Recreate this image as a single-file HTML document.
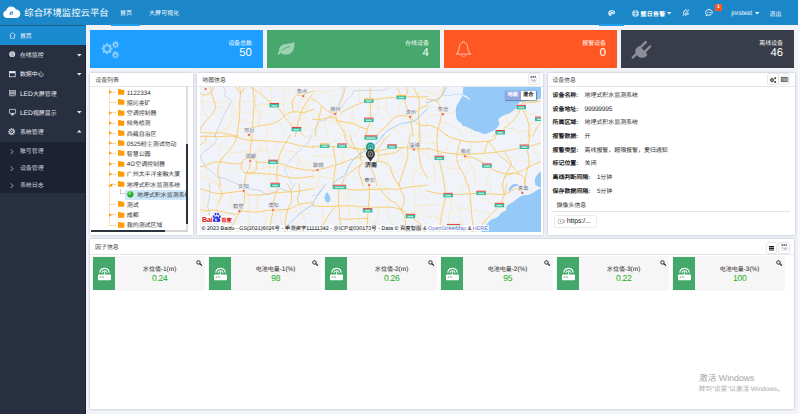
<!DOCTYPE html>
<html lang="zh-CN">
<head>
<meta charset="utf-8">
<title>综合环境监控云平台</title>
<style>
*{box-sizing:border-box;margin:0;padding:0}
html,body{width:800px;height:414px;overflow:hidden}
body{position:relative;background:#f1f3f9;font-family:"Liberation Sans",sans-serif;font-size:5.95px;color:#333;-webkit-font-smoothing:antialiased;text-rendering:geometricPrecision}
.a{position:absolute;white-space:nowrap}
svg{position:absolute;overflow:visible}
/* header */
#hd{left:0;top:0;width:800px;height:25.2px;background:#1b87c8}
#hd .t{color:#fff;height:25px;line-height:25px;top:0}
#logo-t{left:24.3px;top:1.3px !important;font-size:9.38px;letter-spacing:0;font-weight:300}
.ul{background:#1e9fee;height:2.4px;top:23.5px}
/* sidebar */
#sb{left:0;top:25.2px;width:85.8px;height:389px;background:#272f41;border-right:1.5px solid #1b2131}
#sb .act{left:0;top:0;width:85.8px;height:20px;background:#1b8bcf;border-top:.5px solid #1d5f8c}
#sb .sub{left:0;top:116.4px;width:85.8px;height:51px;background:#1c2232}
#sb .i{left:19.9px;height:12px;line-height:12px;color:#eef0f4}
#sb .s{color:#d8dbe2}
/* cards */
.cd{top:29.8px;width:172.8px;height:38.3px}
.cd .l{right:11px;top:9.9px;height:8px;line-height:8px;color:#fff;font-size:5.95px}
.cd .n{right:11px;top:17.2px;height:12px;line-height:12px;color:#fff;font-size:11.3px}
/* panels */
.pn{background:#fff;box-shadow:0 0 2.4px rgba(70,80,110,.4)}
.ph{left:0;top:0;right:0;height:14px;border-bottom:.5px solid #e3e6ea}
.pt{left:5.2px;top:1.75px;height:13px;line-height:13.4px;color:#444;font-size:5.95px}
.bt{width:10.3px;height:10.3px;top:1.4px;background:#fff;box-shadow:0 0 0 .5px #d2d2d2;border-radius:.8px}
/* tree */
.tr{left:36.8px;height:10px;line-height:10px;color:#333;font-size:5.95px}
/* info */
.k{left:5px;font-weight:bold;color:#222;height:10px;line-height:10px}
.v{left:37.2px;color:#2a2a2a;height:10px;line-height:10px}
/* factor */
.fc{top:18px;width:111.4px;height:33.4px;background:#f6f6f6;box-shadow:0 0 0 .4px #e9e9e9}
.fc .g{left:0;top:0;width:22px;height:33.4px;background:#44a86b}
.fc .fl{left:22px;right:0;top:7.9px;text-align:center;font-weight:500;color:#1c1c24;height:10px;line-height:10px;font-size:5.95px}
.fc .fv{left:22px;right:0;top:16.3px;text-align:center;color:#16ab16;height:11px;line-height:11px;font-size:8.5px;letter-spacing:-.25px}
.cl{font-size:5.3px;fill:#74777f;text-anchor:middle;font-family:"Liberation Sans",sans-serif;paint-order:stroke;stroke:#f4f6fb;stroke-width:.7px}
.cb{font-size:5.9px;fill:#2a2a2a;font-weight:bold}
.map{left:0;top:0;overflow:hidden}
</style>
</head>
<body>
<!-- ================= HEADER ================= -->
<div id="hd" class="a">
<svg style="left:2.6px;top:6.4px" width="17.6" height="12.4" viewBox="0 0 178 126"><path fill="#fff" d="M44 122C18 122 2 105 2 84c0-19 13-33 30-37C36 22 56 4 82 4c22 0 40 12 49 31 26 1 45 19 45 44 0 24-18 43-43 43z"/><path fill="#2b8fd0" d="M72 62l22-6 10 4-8 26-24 6-6-8z"/><path fill="#fff" d="M82 68l10-3-4 14-9 2z"/></svg>
<div class="a t" id="logo-t">综合环境监控云平台</div>
<div class="a t" style="left:120.1px;top:2px">首页</div>
<div class="a t" style="left:149px;top:2px;letter-spacing:.15px">大屏可视化</div>
<div class="a ul" style="left:111.3px;width:29.2px"></div>
<div class="a ul" style="left:599.4px;width:24.3px"></div>
<!-- palette -->
<svg style="left:608px;top:10.2px" width="7.4" height="6.3" viewBox="0 0 80 68"><path fill="#fff" d="M40 3C18 3 3 17 3 35c0 16 12 28 26 28 6 0 8-4 7-8-2-6 1-10 8-10h12c13 0 21-7 21-18C77 12 61 3 40 3z"/><circle cx="21" cy="30" r="7.5" fill="#1b87c8"/><circle cx="34" cy="17" r="7.5" fill="#1b87c8"/><circle cx="52" cy="17" r="7.5" fill="#1b87c8"/><circle cx="64" cy="30" r="7" fill="#1b87c8"/><path fill="#1b87c8" d="M30 36c4-4 14-6 22-4 6 2 8 6 4 8H44c-8 0-12 4-10 12-6-2-8-10-4-16z" opacity=".55"/></svg>
<!-- globe -->
<svg style="left:631.9px;top:9.6px" width="7" height="7" viewBox="0 0 70 70"><circle cx="35" cy="35" r="32" fill="#fff"/><path stroke="#1b87c8" stroke-width="4.5" fill="none" d="M35 4v62M4 35h62M12 17c14 7 32 7 46 0M12 53c14-7 32-7 46 0M35 4c-18 18-18 44 0 62M35 4c18 18 18 44 0 62"/></svg>
<div class="a t" style="left:640.6px;top:3px;font-weight:bold;letter-spacing:.25px">整日告警</div>
<svg style="left:667.2px;top:11.6px" width="4.4" height="2.4" viewBox="0 0 44 24"><path fill="#fff" d="M0 0h44L22 24z"/></svg>
<!-- bell slash -->
<svg style="left:681.6px;top:9.4px" width="7.6" height="7.4" viewBox="0 0 76 74"><path fill="none" stroke="#fff" stroke-width="9" stroke-linejoin="round" d="M38 10c-12 0-19 9-19 21 0 10-3 16-8 21h54c-5-5-8-11-8-21 0-12-7-21-19-21z"/><path fill="#fff" d="M30 58h16c0 5-4 9-8 9s-8-4-8-9z"/><path stroke="#1b87c8" stroke-width="14" d="M70 6L8 70"/><path stroke="#fff" stroke-width="8" stroke-linecap="round" d="M70 6L8 70"/></svg>
<!-- chat -->
<svg style="left:705.2px;top:9.2px" width="7.8" height="7.4" viewBox="0 0 78 74"><path fill="none" stroke="#fff" stroke-width="9" d="M40 6c18 0 32 12 32 28S58 62 40 62c-5 0-9-1-13-2L10 68l5-15C9 48 6 41 6 34 6 18 21 6 40 6z"/><circle cx="28" cy="34" r="5" fill="#fff"/><circle cx="42" cy="34" r="5" fill="#fff"/><circle cx="56" cy="34" r="5" fill="#fff"/></svg>
<div class="a" style="left:714.5px;top:4.1px;width:7.8px;height:7.2px;background:#ff5722;border-radius:.6px;color:#fff;font-size:5.2px;line-height:7.4px;text-align:center;font-weight:bold">1</div>
<div class="a t" style="left:731.2px;font-size:6.5px;top:1.3px">jnrstest</div>
<svg style="left:754.6px;top:11.6px" width="4.4" height="2.4" viewBox="0 0 44 24"><path fill="#fff" d="M0 0h44L22 24z"/></svg>
<div class="a t" style="left:769.5px;top:3px">退出</div>

</div>
<!-- ================= SIDEBAR ================= -->
<div id="sb" class="a">
<div class="a act"></div>
<div class="a sub"></div>
<!-- home -->
<svg style="left:8.6px;top:6.8px" width="7" height="7" viewBox="0 0 70 70"><path fill="none" stroke="#fff" stroke-width="6" stroke-linejoin="round" d="M35 6L6 32h9v30h40V32h9z"/></svg>
<div class="a i" style="top:5.7px">首页</div>
<!-- globe -->
<svg style="left:8.8px;top:26px" width="6.4" height="6.4" viewBox="0 0 70 70"><circle cx="35" cy="35" r="32" fill="#eef0f4"/><path stroke="#272f41" stroke-opacity=".75" stroke-width="3.2" fill="none" d="M35 4v62M4 35h62M12 17c14 7 32 7 46 0M12 53c14-7 32-7 46 0M35 4c-18 18-18 44 0 62M35 4c18 18 18 44 0 62"/></svg>
<div class="a i" style="top:24.97px;font-weight:500">在线监控</div>
<svg style="left:76.5px;top:28.6px" width="4.6" height="2.5" viewBox="0 0 46 25"><path fill="#e8eaf0" d="M0 0h46L23 25z"/></svg>
<!-- window -->
<svg style="left:8.5px;top:46.3px" width="6.8" height="6.2" viewBox="0 0 64 62"><rect x="4" y="4" width="56" height="54" fill="none" stroke="#eef0f4" stroke-width="7"/><rect x="4" y="4" width="56" height="18" fill="#eef0f4"/></svg>
<div class="a i" style="top:44.24px;font-weight:500">数据中心</div>
<svg style="left:76.5px;top:47.8px" width="4.6" height="2.5" viewBox="0 0 46 25"><path fill="#e8eaf0" d="M0 0h46L23 25z"/></svg>
<!-- LED -->
<svg style="left:8.7px;top:65px" width="7" height="6.2" viewBox="0 0 70 62"><rect x="4" y="4" width="62" height="46" fill="none" stroke="#eef0f4" stroke-width="6"/><path stroke="#eef0f4" stroke-width="5" fill="none" d="M18 14v26M30 14v26M42 14v26M54 14v26M12 22h46M12 32h46M4 58h62"/></svg>
<div class="a i" style="top:63.5px"><span style="font-size:6.7px">LED</span>大屏管理</div>
<!-- monitor -->
<svg style="left:8.6px;top:84.2px" width="7" height="6.4" viewBox="0 0 70 64"><rect x="4" y="4" width="62" height="40" rx="4" fill="none" stroke="#eef0f4" stroke-width="7"/><path fill="#eef0f4" d="M28 46h14l3 10H25z M18 56h34v6H18z"/></svg>
<div class="a i" style="top:82.8px"><span style="font-size:6.7px">LED</span>视屏显示</div>
<svg style="left:76.5px;top:86.2px" width="4.6" height="2.5" viewBox="0 0 46 25"><path fill="#e8eaf0" d="M0 0h46L23 25z"/></svg>
<!-- gear -->
<svg style="left:8.2px;top:102.9px" width="7.4" height="7.4" viewBox="0 0 74 74"><path fill="none" stroke="#eef0f4" stroke-width="11" stroke-dasharray="10.2 8.6" d="M37 8a29 29 0 1 0 .01 0z"/><circle cx="37" cy="37" r="20" fill="none" stroke="#eef0f4" stroke-width="9"/><circle cx="37" cy="37" r="6" fill="#eef0f4"/></svg>
<div class="a i" style="top:102.05px;font-weight:500">系统管理</div>
<svg style="left:76.5px;top:105.2px" width="4.6" height="2.5" viewBox="0 0 46 25"><path fill="#e8eaf0" d="M0 25h46L23 0z"/></svg>
<!-- sub items -->
<svg style="left:9.7px;top:123.4px" width="3.8" height="5.4" viewBox="0 0 38 54"><path fill="none" stroke="#e0e3ea" stroke-width="7" d="M8 4l22 23L8 50"/></svg>
<div class="a i s" style="top:120.45px">账号管理</div>
<svg style="left:9.7px;top:140.4px" width="3.8" height="5.4" viewBox="0 0 38 54"><path fill="none" stroke="#e0e3ea" stroke-width="7" d="M8 4l22 23L8 50"/></svg>
<div class="a i s" style="top:137.45px">设备管理</div>
<svg style="left:9.7px;top:157.6px" width="3.8" height="5.4" viewBox="0 0 38 54"><path fill="none" stroke="#e0e3ea" stroke-width="7" d="M8 4l22 23L8 50"/></svg>
<div class="a i s" style="top:154.65px">系统日志</div>

</div>
<!-- ================= STAT CARDS ================= -->
<div class="a cd" style="left:90.1px;background:#1e9fff">
<svg style="left:9.9px;top:10.6px;opacity:.46" width="20.4" height="19" viewBox="0 0 200 186"><g fill="#fff"><path fill-rule="evenodd" d="M67 30l10 1 4 13 9 4 12-7 11 11-7 12 4 9 13 4v16l-13 4-4 9 7 12-11 11-12-7-9 4-4 13H61l-4-13-9-4-12 7-11-11 7-12-4-9-13-4V77l13-4 4-9-7-12 11-11 12 7 9-4 4-13zM69 62a23 23 0 1 0 .01 0z"/><path fill-rule="evenodd" d="M150 6l8 1 2 9 5 3 8-4 7 8-5 8 2 5 9 3v10l-9 3-2 5 5 8-7 8-8-5-5 3-2 9h-11l-2-9-5-3-8 5-8-8 5-8-2-5-9-3V44l9-3 2-5-5-8 8-8 8 4 5-3 2-9zM153 38a11 11 0 1 0 .01 0z"/><path fill-rule="evenodd" d="M150 108l8 1 2 9 5 3 8-4 7 8-5 8 2 5 9 3v10l-9 3-2 5 5 8-7 8-8-5-5 3-2 9h-11l-2-9-5-3-8 5-8-8 5-8-2-5-9-3v-10l9-3 2-5-5-8 8-8 8 4 5-3 2-9zM153 140a11 11 0 1 0 .01 0z"/></g></svg>
<div class="a l">设备总数</div><div class="a n">50</div>
</div>
<div class="a cd" style="left:267.1px;background:#46a86c">
<svg style="left:10.3px;top:11.4px;opacity:.47" width="17.9" height="14.5" viewBox="80 95 265 215"><path fill="#fff" d="M335 105C300 135 230 130 180 145C130 160 105 200 112 245L92 275C84 285 88 298 100 300C108 300 112 296 118 288L135 268C170 305 250 305 295 265C335 225 345 160 335 105Z"/><path fill="none" stroke="#46a86c" stroke-width="13" stroke-linecap="round" d="M152 240C180 207 225 187 263 181"/></svg>
<div class="a l">在线设备</div><div class="a n">4</div>
</div>
<div class="a cd" style="left:444.2px;background:#ff5722">
<svg style="left:11px;top:10.6px;opacity:.5" width="17" height="17.8" viewBox="0 0 164 170"><path fill="none" stroke="#fff" stroke-width="11" stroke-linejoin="round" d="M82 14c-6 0-9 4-9 9-22 6-30 26-32 52-2 30-12 46-30 60h142c-18-14-28-30-30-60-2-26-10-46-32-52 0-5-3-9-9-9z"/><path fill="none" stroke="#fff" stroke-width="9" d="M62 142c2 12 10 18 20 18s18-6 20-18"/></svg>
<div class="a l">报警设备</div><div class="a n">0</div>
</div>
<div class="a cd" style="left:621.2px;background:#393d49">
<svg style="left:9.6px;top:10.4px;opacity:.92" width="20" height="18.8" viewBox="0 0 190 180"><g fill="#9497a0"><path d="M8 176c-5-5-5-11 0-16l44-44 16 16-44 44c-5 5-11 5-16 0z"/><path d="M46 86l24-24 84 84c-10 12-24 22-42 24-20 2-40-6-54-22-14-14-20-32-18-48 0-5 2-10 6-14z" transform="rotate(0)"/><path d="M54 78C44 100 48 126 66 144c18 18 46 22 66 10l24-20L78 56z"/><path d="M100 62l54-54c5-5 11-5 16 0s5 11 0 16l-54 54zM142 104l54-54c5-5 11-5 16 0s5 11 0 16l-54 54z" transform="translate(-22,4)"/></g></svg>
<div class="a l">离线设备</div><div class="a n">46</div>
</div>

<!-- ================= PANELS ================= -->
<div class="a pn" style="left:90px;top:72.8px;width:102.5px;height:162.3px;overflow:hidden">
<div class="a ph"></div><div class="a pt">设备列表</div>
<div class="a" style="left:0;top:13.6px;width:95.7px;height:144px;overflow:hidden"><div class="a" style="left:0;top:-13.6px;width:200px;height:170px">
<div class="a" style="left:19px;top:13.6px;width:.45px;height:138.5px;background:#ffe3bd"></div>
<div class="a" style="left:19.2px;top:19.25px;width:6.6px;height:.45px;background:#ffd699"></div>
<svg style="left:18.8px;top:17.5px" width="3" height="4" viewBox="0 0 34 44"><path fill="#ffa11f" d="M0 0l34 22L0 44z"/></svg>
<svg style="left:27.7px;top:16.4px" width="6.3" height="5.8" viewBox="0 0 63 58"><path fill="#ff9a0a" d="M0 6c0-3 2-6 6-6h18l7 8h26c4 0 6 3 6 6v38c0 3-2 6-6 6H6c-4 0-6-3-6-6z"/></svg>
<div class="a tr" style="top:16px"><span style="font-size:6.3px">1122334</span></div>
<div class="a" style="left:19.2px;top:29.45px;width:6.6px;height:.45px;background:#ffd699"></div>
<svg style="left:27.7px;top:26.6px" width="6.3" height="5.8" viewBox="0 0 63 58"><path fill="#ff9a0a" d="M0 6c0-3 2-6 6-6h18l7 8h26c4 0 6 3 6 6v38c0 3-2 6-6 6H6c-4 0-6-3-6-6z"/></svg>
<div class="a tr" style="top:26.2px">招远金矿</div>
<div class="a" style="left:19.2px;top:39.65px;width:6.6px;height:.45px;background:#ffd699"></div>
<svg style="left:18.8px;top:37.9px" width="3" height="4" viewBox="0 0 34 44"><path fill="#ffa11f" d="M0 0l34 22L0 44z"/></svg>
<svg style="left:27.7px;top:36.8px" width="6.3" height="5.8" viewBox="0 0 63 58"><path fill="#ff9a0a" d="M0 6c0-3 2-6 6-6h18l7 8h26c4 0 6 3 6 6v38c0 3-2 6-6 6H6c-4 0-6-3-6-6z"/></svg>
<div class="a tr" style="top:36.4px">空调控制器</div>
<div class="a" style="left:19.2px;top:49.85px;width:6.6px;height:.45px;background:#ffd699"></div>
<svg style="left:18.8px;top:48.1px" width="3" height="4" viewBox="0 0 34 44"><path fill="#ffa11f" d="M0 0l34 22L0 44z"/></svg>
<svg style="left:27.7px;top:47px" width="6.3" height="5.8" viewBox="0 0 63 58"><path fill="#ff9a0a" d="M0 6c0-3 2-6 6-6h18l7 8h26c4 0 6 3 6 6v38c0 3-2 6-6 6H6c-4 0-6-3-6-6z"/></svg>
<div class="a tr" style="top:46.6px">倾角检测</div>
<div class="a" style="left:19.2px;top:60.05px;width:6.6px;height:.45px;background:#ffd699"></div>
<svg style="left:18.8px;top:58.3px" width="3" height="4" viewBox="0 0 34 44"><path fill="#ffa11f" d="M0 0l34 22L0 44z"/></svg>
<svg style="left:27.7px;top:57.2px" width="6.3" height="5.8" viewBox="0 0 63 58"><path fill="#ff9a0a" d="M0 6c0-3 2-6 6-6h18l7 8h26c4 0 6 3 6 6v38c0 3-2 6-6 6H6c-4 0-6-3-6-6z"/></svg>
<div class="a tr" style="top:56.8px">西藏自治区</div>
<div class="a" style="left:19.2px;top:70.25px;width:6.6px;height:.45px;background:#ffd699"></div>
<svg style="left:18.8px;top:68.5px" width="3" height="4" viewBox="0 0 34 44"><path fill="#ffa11f" d="M0 0l34 22L0 44z"/></svg>
<svg style="left:27.7px;top:67.4px" width="6.3" height="5.8" viewBox="0 0 63 58"><path fill="#ff9a0a" d="M0 6c0-3 2-6 6-6h18l7 8h26c4 0 6 3 6 6v38c0 3-2 6-6 6H6c-4 0-6-3-6-6z"/></svg>
<div class="a tr" style="top:67px"><span style="font-size:6.3px">0525</span>粉尘测试勿动</div>
<div class="a" style="left:19.2px;top:80.45px;width:6.6px;height:.45px;background:#ffd699"></div>
<svg style="left:18.8px;top:78.7px" width="3" height="4" viewBox="0 0 34 44"><path fill="#ffa11f" d="M0 0l34 22L0 44z"/></svg>
<svg style="left:27.7px;top:77.6px" width="6.3" height="5.8" viewBox="0 0 63 58"><path fill="#ff9a0a" d="M0 6c0-3 2-6 6-6h18l7 8h26c4 0 6 3 6 6v38c0 3-2 6-6 6H6c-4 0-6-3-6-6z"/></svg>
<div class="a tr" style="top:77.2px">智慧公园</div>
<div class="a" style="left:19.2px;top:90.65px;width:6.6px;height:.45px;background:#ffd699"></div>
<svg style="left:18.8px;top:88.9px" width="3" height="4" viewBox="0 0 34 44"><path fill="#ffa11f" d="M0 0l34 22L0 44z"/></svg>
<svg style="left:27.7px;top:87.8px" width="6.3" height="5.8" viewBox="0 0 63 58"><path fill="#ff9a0a" d="M0 6c0-3 2-6 6-6h18l7 8h26c4 0 6 3 6 6v38c0 3-2 6-6 6H6c-4 0-6-3-6-6z"/></svg>
<div class="a tr" style="top:87.4px"><span style="font-size:6.3px">4G</span>空调控制器</div>
<div class="a" style="left:19.2px;top:100.85px;width:6.6px;height:.45px;background:#ffd699"></div>
<svg style="left:18.8px;top:99.1px" width="3" height="4" viewBox="0 0 34 44"><path fill="#ffa11f" d="M0 0l34 22L0 44z"/></svg>
<svg style="left:27.7px;top:98px" width="6.3" height="5.8" viewBox="0 0 63 58"><path fill="#ff9a0a" d="M0 6c0-3 2-6 6-6h18l7 8h26c4 0 6 3 6 6v38c0 3-2 6-6 6H6c-4 0-6-3-6-6z"/></svg>
<div class="a tr" style="top:97.6px">广州太平洋金融大厦</div>
<div class="a" style="left:19.2px;top:111.05px;width:6.6px;height:.45px;background:#ffd699"></div>
<svg style="left:17.6px;top:109.9px" width="4.4" height="3.6" viewBox="0 0 44 36"><path fill="#ff9800" d="M44 0v36H0z"/></svg>
<svg style="left:27.7px;top:108.2px" width="6.3" height="5.8" viewBox="0 0 63 58"><path fill="#ff9a0a" d="M0 6c0-3 2-6 6-6h18l7 8h26c4 0 6 3 6 6v38c0 3-2 6-6 6H6c-4 0-6-3-6-6z"/></svg>
<div class="a tr" style="top:107.8px">地埋式积水监测系统</div>
<div class="a" style="left:35.2px;top:117.2px;width:60.8px;height:9.9px;background:#cfe8fc"></div>
<div class="a" style="left:30px;top:116.7px;width:5px;height:4.8px;border-left:.5px solid #c9c9c9;border-bottom:.5px solid #c9c9c9"></div>
<svg style="left:37.4px;top:118.2px" width="6.6" height="6.6" viewBox="0 0 66 66"><defs><radialGradient id="gb" cx=".4" cy=".32" r=".7"><stop offset="0" stop-color="#8be58b"/><stop offset=".55" stop-color="#2db82d"/><stop offset="1" stop-color="#168f16"/></radialGradient></defs><circle cx="33" cy="33" r="31" fill="url(#gb)"/></svg>
<div class="a tr" style="left:47px;top:118px">地埋式积水监测系统</div>
<div class="a" style="left:19.2px;top:131.45px;width:6.6px;height:.45px;background:#ffd699"></div>
<svg style="left:27.7px;top:128.6px" width="6.3" height="5.8" viewBox="0 0 63 58"><path fill="#ff9a0a" d="M0 6c0-3 2-6 6-6h18l7 8h26c4 0 6 3 6 6v38c0 3-2 6-6 6H6c-4 0-6-3-6-6z"/></svg>
<div class="a tr" style="top:128.2px">测试</div>
<div class="a" style="left:19.2px;top:141.65px;width:6.6px;height:.45px;background:#ffd699"></div>
<svg style="left:18.8px;top:139.9px" width="3" height="4" viewBox="0 0 34 44"><path fill="#ffa11f" d="M0 0l34 22L0 44z"/></svg>
<svg style="left:27.7px;top:138.8px" width="6.3" height="5.8" viewBox="0 0 63 58"><path fill="#ff9a0a" d="M0 6c0-3 2-6 6-6h18l7 8h26c4 0 6 3 6 6v38c0 3-2 6-6 6H6c-4 0-6-3-6-6z"/></svg>
<div class="a tr" style="top:138.4px">成都</div>
<div class="a" style="left:19.2px;top:151.85px;width:6.6px;height:.45px;background:#ffd699"></div>
<svg style="left:27.7px;top:149px" width="6.3" height="5.8" viewBox="0 0 63 58"><path fill="#ff9a0a" d="M0 6c0-3 2-6 6-6h18l7 8h26c4 0 6 3 6 6v38c0 3-2 6-6 6H6c-4 0-6-3-6-6z"/></svg>
<div class="a tr" style="top:148.6px">我的测试区域</div>
</div></div>
<div class="a" style="left:95.7px;top:13.6px;width:2px;height:144px;background:#dedede"></div>
<div class="a" style="left:95.8px;top:71px;width:1.9px;height:80.3px;background:#2e3340"></div>
<div class="a" style="left:1px;top:157.4px;width:96.6px;height:2.2px;background:#d4d4d4"></div>
<div class="a" style="left:1px;top:157.4px;width:73.8px;height:2.2px;background:#2e3340"></div>
</div>
<div class="a pn" style="left:197px;top:72.8px;width:346.3px;height:162.3px">
<div class="a ph"></div><div class="a pt">地图信息</div>
<div class="a bt" style="left:331.6px"><svg style="left:1.6px;top:1.4px" width="6.6" height="6.8" viewBox="0 0 66 68"><rect x="3" y="12" width="60" height="53" fill="#fbfbfd" stroke="#c9c9d6" stroke-width="3.5"/><path fill="#2b2b33" d="M6 3h13v13H6zM26 3h13v13H26zM46 3h13v13H46z"/><path fill="#b9bcc6" d="M30 36h26v20H30z"/><path fill="#8d93a8" d="M10 26l8 18 10-8v8H10z"/></svg></div>
</div>
<svg class="map" style="left:199.8px;top:86.6px" width="341.4" height="145" viewBox="199.8 86.6 341.4 145">
<rect x="190" y="80" width="360" height="160" fill="#f0f3fa"/>
<path fill="none" stroke="#fbe9bf" stroke-width="0.42" d="M308.6 105C307.7 105.9 305.8 108 303.1 110.3C300.5 112.7 295.3 116.4 292.8 118.9C290.4 121.4 289.3 124.1 288.6 125.2M341.7 118.9C341.1 120.1 339.1 122.8 338.1 125.9C337.1 128.9 337.2 133.7 335.7 137C334.2 140.3 330.1 144.3 328.9 145.7M334.2 232.9C335.5 232.8 339.5 233.2 342.2 232.4C344.9 231.7 347.7 229.3 350.4 228.5C353.2 227.6 355.4 227.7 358.6 227.4C361.9 227.1 368.2 226.9 370.1 226.8M325.7 166.5C327.3 167 332 168.5 335.6 169.8C339.2 171 343.2 172.6 347.3 174C351.4 175.4 358 177.5 360.1 178.2M321.9 120.1C323.4 120.3 327.8 121 330.9 121.4C333.9 121.9 336.8 122.4 340.2 122.8C343.6 123.2 347.9 124.2 351.4 123.8C354.9 123.4 359.7 120.9 361.4 120.3M252.8 134.6C251.2 135.8 246.8 139.9 243.6 141.9C240.4 143.8 236.7 145.5 233.5 146.2C230.3 147 227.7 146.8 224.3 146.5C220.9 146.2 216.8 145.4 213.3 144.7C209.8 144 207 143.9 203.4 142.2C199.9 140.5 194 135.9 192.1 134.7M361.4 184.5C363.6 185.3 371.2 187.5 374.6 189.2C377.9 190.9 378.8 192.7 381.7 194.7C384.5 196.6 388.3 199.6 391.7 200.7C395 201.9 398.9 201.7 401.9 201.4C404.8 201.2 408.2 199.7 409.4 199.4M215.5 200.7C217.7 201.3 224.9 203.6 228.3 204.7C231.8 205.8 233.4 206.4 236.1 207.1C238.9 207.8 241.8 208.9 244.9 208.9C248 208.9 253.1 207.6 254.8 207.3M388.1 191.1C386.9 190.5 383.4 188.5 380.8 187.8C378.1 187.2 375.3 186.9 372.2 187.1C369.1 187.2 365.1 188.4 362 188.9C358.8 189.3 356 188.6 353.1 189.6C350.3 190.7 347.6 193 344.8 195.1C342.1 197.2 337.9 201.1 336.6 202.3M529.7 188.6C529.7 190.8 530.5 197.8 529.6 201.7C528.8 205.7 526.1 209.1 524.5 212.3C522.8 215.5 520.4 219.4 519.6 220.8M333.3 156.2C334.3 157.3 336.7 160.7 339 162.5C341.4 164.2 344.8 166.1 347.3 166.8C349.9 167.6 351.9 167.5 354.3 167.1C356.7 166.8 360.4 165.2 361.7 164.8M322.6 85.6C321.5 86.5 318.2 89.3 316.1 91.5C314.1 93.7 311.8 95.7 310.2 99C308.6 102.3 308.3 108.1 306.4 111.4C304.6 114.6 301.3 116.5 299.2 118.6C297.1 120.7 295.3 121.7 293.9 124C292.4 126.4 291 131.3 290.4 132.8M287.8 210.1C290.1 210.6 297 212.3 301.2 213C305.4 213.6 309.2 212.7 313 213.8C316.8 214.9 322 218.6 323.9 219.6M299.5 181.3C301.7 181.9 308.8 184.4 312.3 185.3C315.8 186.1 317.6 186 320.7 186.6C323.9 187.2 327.6 187.7 331 188.7C334.5 189.7 338.3 190.6 341.7 192.5C345.1 194.3 350 198.5 351.7 199.7M263.4 118.7C264.4 120.1 267.5 123.7 269.4 127.3C271.2 130.8 273.5 136.3 274.6 140.2C275.6 144.1 274.6 147 275.5 150.4C276.4 153.9 279.1 159.1 279.8 160.8M315.8 206.9C314.3 207.6 309.6 209.2 307 210.8C304.5 212.3 302.3 214.2 300.4 216.3C298.6 218.4 298.1 220.5 295.9 223.4C293.7 226.2 290.2 231 287.3 233.6C284.4 236.1 279.9 237.9 278.4 238.8M424.3 205.5C425.9 206.8 431.3 210.7 434 213.4C436.6 216 437.5 219.1 440.2 221.6C443 224.2 448.8 227.6 450.5 228.7M311.6 205.7C309.6 206 302.7 206.3 299.5 207.3C296.4 208.2 294.9 210.7 292.6 211.4C290.2 212.2 288.3 211.8 285.4 211.8C282.5 211.8 278.7 211.8 275.2 211.3C271.6 210.9 267.6 210 264.1 209.1C260.6 208.2 255.9 206.6 254.2 206.1M524.2 105.8C525 107.9 527.7 114.9 528.7 118.8C529.8 122.7 530.8 125.9 530.7 129.3C530.6 132.7 528.6 137.4 528.2 139M501.1 209.7C502.8 210.3 508 211.9 510.9 213.5C513.8 215.1 515.5 216.8 518.4 219C521.3 221.3 524.7 225.3 528.3 227.2C531.9 229 536.6 228.5 540.1 230.1C543.6 231.8 547.9 235.9 549.4 237.1M481.2 161.7C479.7 162.6 474.4 164.6 471.9 166.9C469.4 169.2 467.6 172.8 466.4 175.4C465.2 177.9 465.6 179.9 464.6 182.1C463.6 184.4 460.9 187.9 460.2 189.1M361.2 194C360.6 195.7 358.7 200.4 357.4 204C356.1 207.7 354.8 212.9 353.2 215.7C351.7 218.6 349.6 219.2 348.3 221.3C347 223.3 345.9 225.1 345.4 228C344.9 230.8 345.3 236.4 345.2 238.1M204.6 220.2C206.3 220.7 211.1 222.2 214.6 223.4C218.2 224.6 222.3 226.1 225.9 227.2C229.5 228.3 232.3 229 236.2 230.1C240.1 231.2 245.2 232 249.3 233.5C253.5 235 259.2 238.3 261.1 239.3M525.9 121.8C525.2 123 522.8 125.9 521.9 128.7C521 131.5 520.2 135.6 520.4 138.7C520.5 141.8 521.1 144.2 522.8 147C524.4 149.9 529.1 154.5 530.4 155.9M470.3 220.6C472.5 220.9 480 221.2 483.3 222.3C486.7 223.4 488.4 224.9 490.4 227.1C492.4 229.3 493.3 232.2 495.3 235.6C497.3 239 500.9 244.3 502.4 247.6C503.9 250.9 503.8 254.2 504 255.5M346.4 161.5C347.2 162.5 349.2 165.5 351.1 167.6C352.9 169.7 355.1 171.8 357.7 174.3C360.2 176.7 363.5 180 366.4 182.3C369.3 184.7 373.6 187.6 375 188.6M298.6 230.5C299.5 231.5 302 234.6 303.9 236.2C305.7 237.8 307.9 238.5 309.9 240.3C311.9 242.1 313.2 245.1 315.6 247.1C318 249 322.9 251 324.4 251.8M515.1 208.5C516.2 209.9 519.9 214 522.1 216.5C524.3 219 525.5 221.1 528.3 223.4C531 225.8 534.7 228.9 538.5 230.8C542.3 232.7 549 234.1 551.1 234.8M289.3 84.2C291.4 83.9 298.2 83.9 302.2 82.4C306.1 80.9 310 77.4 313.1 75.4C316.2 73.3 317.6 72 320.8 69.9C324 67.8 329.4 64.9 332.2 62.7C335 60.6 336.8 58 337.7 57.1M380 118.6C381.3 118.7 385.2 118.3 388.2 119.4C391.2 120.5 395.2 123.5 398 125.3C400.8 127 402.2 128.1 405.1 129.8C408 131.5 413.6 134.6 415.3 135.6M289.9 206.2C288.1 207.1 282.2 210.4 279.2 212C276.2 213.6 275 214 271.7 215.6C268.5 217.3 261.7 220.8 259.7 221.8M232.1 208.5C232.5 210.7 234.4 217.9 234.3 221.6C234.3 225.2 232.1 227.4 231.6 230.3C231.1 233.2 230.9 235.4 231.5 238.9C232 242.5 234.5 248.1 235.1 251.6C235.8 255 236.5 256.1 235.6 259.5C234.7 263 230.7 270 229.7 272.1M488.9 83.8C488.5 85 487.7 88.2 486.6 90.8C485.4 93.4 483.9 95.9 482 99.3C480.2 102.8 477.6 107.8 475.4 111.5C473.2 115.1 470.1 118.3 468.8 121.3C467.5 124.3 467.8 128.1 467.6 129.5M289.3 82.2C289.3 84 288.4 88.9 288.8 93C289.2 97 290.6 102.7 291.7 106.4C292.8 110.1 293.5 112.7 295.4 115.2C297.3 117.6 300.3 119.1 303 121.2C305.6 123.3 310 126.5 311.4 127.5M265.4 159.8C266.7 160.3 270.2 161.4 273 162.4C275.7 163.5 278.6 165.3 281.9 166.4C285.2 167.5 288.9 168.9 293 168.9C297.1 168.9 302.9 166.5 306.5 166.2C310.1 166 313.1 167.3 314.5 167.5M508.5 203.1C507.7 204.6 504.7 208.9 503.3 212.2C501.9 215.5 500.3 219.1 499.9 223C499.4 226.9 500.7 231.9 500.5 235.7C500.3 239.6 499.2 242.5 498.7 246.2C498.2 249.9 497.7 256.1 497.5 258M372.4 222.6C370.8 223.4 366.1 226.5 362.5 227.5C358.8 228.4 354.1 228.2 350.7 228.1C347.3 228 343.6 227.2 342.2 227M205.7 102.2C206.7 103.7 209.2 108.8 211.2 110.8C213.1 112.9 215 113.2 217.2 114.6C219.4 116.1 223.2 118.7 224.4 119.5M287.5 152.4C288.7 152.9 292.1 153.9 294.4 155.2C296.8 156.5 298.9 159.1 301.6 160.3C304.2 161.4 308.8 161.7 310.3 161.9M451.1 113.4C450 114.6 446.9 117.9 444.5 120.5C442.1 123.2 439.6 126.8 436.7 129.3C433.8 131.8 429.9 133.9 427.2 135.5C424.5 137.1 422.5 137.1 420.4 138.7C418.2 140.2 416.5 143.1 414.2 144.9C411.8 146.7 407.7 148.8 406.3 149.6M394.3 83.5C395.3 84.3 397.8 86.8 400.4 88.3C403 89.7 407.2 90.7 410.1 92.1C412.9 93.6 414.5 95.2 417.5 97.1C420.5 99.1 425.4 101 428 103.7C430.7 106.3 432.6 111.5 433.5 113.1M304.3 94.9C304.6 97 306.2 103.8 305.9 107.5C305.6 111.2 303.2 114.1 302.5 117.1C301.8 120.1 302.5 122.9 301.6 125.5C300.7 128.1 298.6 130.4 297.1 132.7C295.6 135 293.1 138.1 292.4 139.1M379 229.3C380.3 230.7 383.9 235.3 387.2 237.9C390.5 240.4 395.7 242.9 398.7 244.6C401.6 246.4 402.1 247.6 404.9 248.2C407.7 248.8 412.1 248.4 415.3 248.5C418.6 248.5 422.9 248.3 424.4 248.2M244.2 134.9C246 135.9 252.4 138.8 255 140.7C257.7 142.7 258.8 143.7 260.3 146.5C261.8 149.4 263.5 154.6 264 158C264.4 161.4 263.2 163.8 263.1 166.9C263.1 170.1 263.4 175.1 263.5 176.7M545.8 172.9C546.2 175 547.3 182.4 548.1 185.7C549 188.9 550.1 189.5 551 192.5C551.9 195.4 552 199.8 553.7 203.6C555.4 207.3 559.2 211.9 561.4 215C563.6 218.2 565.3 219.2 567 222.4C568.7 225.5 570.9 232 571.6 234M345.1 86.1C343 86.8 336.3 89.3 332.3 90.6C328.2 91.9 324.2 92 320.7 94C317.3 95.9 314.7 99.3 311.8 102.1C308.8 104.9 305.7 108.4 303.1 110.8C300.4 113.1 298.1 113.3 295.9 116.2C293.6 119.1 290.7 126.2 289.7 128.1M239.5 154.8C240.9 156.3 245.4 160.9 247.7 163.8C250 166.7 250.9 169.5 253.1 172C255.3 174.6 258.8 176.8 260.9 178.9C263 181.1 264.3 183 265.8 185.1C267.2 187.2 269 190.5 269.6 191.5M370.7 207.4C369.5 209.4 365.1 216.1 363.2 219.2C361.3 222.4 360.2 223.8 359.3 226.2C358.4 228.6 358.1 231.1 357.7 233.7C357.4 236.2 357.1 238.6 357.4 241.3C357.6 244 358.6 246.3 359.2 249.9C359.8 253.5 360.8 260.8 361.1 263M458.2 145.6C458.8 147 460.1 151.8 461.8 154.2C463.5 156.7 466.9 158 468.4 160.3C470 162.5 470.1 164.6 471.2 167.6C472.4 170.6 474.6 176.5 475.3 178.3M498 115.1C499.4 116.4 503.9 120.6 506.5 122.8C509.2 125 511.3 125.6 513.8 128.5C516.2 131.4 518.8 137.1 521.4 140C524 142.8 528.2 144.7 529.6 145.7M463.2 206.3C461.8 207.2 458.6 210.5 455.1 211.8C451.7 213 446.9 214 442.5 213.9C438.2 213.9 432.5 211.8 429 211.4C425.4 211.1 424.1 211.2 421.2 212C418.3 212.8 415.3 215 411.5 216.3C407.6 217.5 400.4 218.9 398.2 219.4M448.4 181.9C447.6 183.8 444.1 190.1 443.4 193.3C442.6 196.5 443.9 198.6 444 201.2C444.1 203.7 444.6 205 444.1 208.4C443.7 211.9 442.4 218 441.3 221.9C440.3 225.8 439 228.3 437.9 232C436.8 235.7 435.2 241.9 434.6 243.9M229.7 128.2C228.4 128.6 224.1 130 221.5 130.6C219 131.2 217.3 131.1 214.6 131.9C211.9 132.8 208.6 135.3 205.1 135.8C201.6 136.3 195.5 135.1 193.6 134.9M505.4 155.3C506.9 155.7 512.2 156.9 514.9 157.9C517.6 158.8 518.3 160.1 521.6 160.9C525 161.6 531.4 161.8 534.8 162.3C538.2 162.9 540.9 163.9 542.1 164.3M274.9 147.4C276.1 148.4 279.2 151.2 282 153.4C284.8 155.5 288.1 158.4 291.6 160.2C295.2 162 300.1 162.5 303.6 164.1C307.1 165.7 308.8 168.1 312.6 169.7C316.3 171.2 321.5 172.5 325.9 173.2C330.2 174 336.5 174 338.6 174.1M275.9 115.9C275.1 117.6 273.1 122.6 271.2 126.3C269.3 129.9 266.6 133.8 264.4 137.7C262.2 141.5 259 145.5 257.7 149.3C256.5 153 257.6 157.5 256.8 160.4C256.1 163.3 253.9 165.8 253.3 166.9M203.1 174C204 175.4 207.2 179.6 208.7 182.5C210.2 185.3 210.6 188.7 212 191.1C213.4 193.4 216.3 195.6 217.2 196.6M253 111.2C253 113.1 252.7 119.3 252.9 122.8C253 126.3 253.4 129.5 253.9 132.4C254.5 135.3 254.8 137.9 256.2 140.2C257.6 142.6 259.6 144.2 262.5 146.6C265.3 149.1 269.4 152.9 273.4 154.9C277.4 156.9 284.4 157.9 286.6 158.5M267.7 136.9C266.6 138.5 262.6 143.4 261 146.7C259.3 150.1 258.7 153.9 257.8 157.1C256.9 160.3 256.8 163 255.6 166.1C254.5 169.1 252.5 172.5 250.9 175.2C249.3 178 247.8 180 245.9 182.4C244 184.8 240.4 188.5 239.3 189.7M326.8 153.5C325.4 155.1 321.5 160.6 318.8 162.8C316.1 165 313.6 164.8 310.4 167C307.3 169.1 301.6 174.3 299.8 175.7M411.6 122.2C410.3 122.9 406.7 125.2 403.5 126.3C400.3 127.4 396.7 128.7 392.7 129C388.6 129.3 383.3 127.5 379.1 128.2C374.8 128.8 370.6 130.7 367.2 132.8C363.7 135 359.9 139.8 358.5 141.2M358.5 201.9C357.2 202.4 353.4 203.8 351 204.6C348.7 205.5 347 206.8 344.4 207C341.7 207.3 338.1 206.8 335.3 206.3C332.5 205.8 331 204.5 327.5 204.1C324.1 203.7 318.7 203.9 314.5 204C310.2 204 304.1 204.3 302 204.3M404.1 160.9C404.8 162 406 165.2 408.3 167.1C410.6 169 414 170.8 417.8 172.4C421.5 174.1 426.9 174.7 430.9 177C434.8 179.3 439.6 184.7 441.3 186.2M287.9 94.6C289.5 96.3 294.8 102.2 297.6 104.5C300.4 106.7 301.5 106.5 304.7 108C307.9 109.5 313 112.3 316.7 113.5C320.5 114.7 323.7 114 327.4 115.2C331 116.3 335.5 118.5 338.5 120.4C341.5 122.2 344.2 125.3 345.4 126.3M293 123.1C294.3 123.8 298.1 126.2 300.7 127.3C303.2 128.3 305.7 127.8 308.5 129.2C311.3 130.6 314.5 133.9 317.4 135.7C320.4 137.5 323.7 137.8 326.2 140C328.7 142.1 331.4 147.1 332.4 148.5M276.1 206.9C276 208.6 276.2 213.5 275.2 217.2C274.3 220.9 271.9 226.2 270.2 229C268.5 231.9 265.8 233.2 264.9 234M298 100.1C298.8 101.4 301.8 105.3 303 108.3C304.1 111.3 303.6 114.7 304.8 118.3C305.9 121.8 309 126.5 309.8 129.6C310.7 132.8 309.7 136.1 309.6 137.4M404.3 177.7C405.3 178.3 408.9 179.7 410.6 181.3C412.3 183 413.1 184.4 414.4 187.6C415.7 190.7 417.9 196 418.5 200.3C419.2 204.5 418.4 209.3 418.5 213C418.7 216.7 419.3 221 419.4 222.6M413 93.7C414.3 93.9 417.6 95 420.4 94.8C423.2 94.5 426.4 93.1 429.8 92.3C433.3 91.5 438.1 91.2 441.1 90C444.1 88.9 445.1 86.8 447.8 85.4C450.4 83.9 454.1 83 456.8 81.4C459.5 79.8 462.9 76.9 464.2 76M529.8 130C529.6 131.2 529.8 134 528.9 137.1C527.9 140.2 525.7 145.4 524.1 148.8C522.5 152.1 520.9 153.7 519.1 157.1C517.3 160.6 514.8 166.1 513.3 169.4C511.9 172.7 510.9 175.7 510.4 177M234.7 95.6C234.4 97 232.8 100.5 233 103.6C233.3 106.7 235.2 110.1 236 114C236.8 118 236.6 123.5 237.9 127.3C239.2 131.1 241.7 134 243.8 136.9C245.9 139.9 249.3 143.8 250.4 145.1M246.1 125.5C246.6 127.2 248.8 131.5 249.4 135.4C250 139.3 249.2 145.6 249.7 149.2C250.1 152.7 251.8 155.4 252.2 156.6M526.2 232.8C526.1 234.7 525 240.5 525.6 244.2C526.2 248 528.7 251.4 529.8 255.5C530.9 259.5 531.7 266.3 532.1 268.5M419.8 214.4C418.9 215.4 416 218.1 414.4 220.7C412.8 223.2 411.7 226.6 410.4 229.6C409 232.5 407 235.4 406.2 238.3C405.4 241.2 405.7 245.6 405.6 247M449.5 220.7C451 221.1 455.2 222.6 458.4 223.4C461.5 224.2 464.9 223.9 468.4 225.3C471.9 226.7 477.3 230.6 479.1 231.6M422.9 129.4C423.9 130.7 427.1 135.3 428.8 137.6C430.6 139.8 431.7 140.7 433.4 143.1C435.1 145.5 436.6 149 439 151.9C441.5 154.7 445.8 157.3 448.2 160.1C450.6 163 451.4 166.3 453.6 168.8C455.8 171.3 460.2 174.3 461.5 175.4M232.4 101.5C232.3 103.3 232 109.1 231.5 112C231.1 114.9 229.8 115.7 229.8 119.1C229.8 122.5 231.2 130.2 231.5 132.4M305 193.3C307 194.1 313.4 197.4 316.5 198.2C319.7 198.9 320.8 197.6 324 197.6C327.2 197.6 332.6 198.5 335.8 198.2C339 197.8 340.5 195.9 343.3 195.5C346 195.1 348.8 195.1 352.3 195.8C355.7 196.6 362.1 199.4 364.1 200.1M435.9 193.4C436.9 194.4 439.4 197.5 442 199.7C444.5 201.8 448.7 203.8 451.1 206.3C453.5 208.9 453.8 212 456.3 215.1C458.8 218.2 463.1 221.9 466 224.8C469 227.8 472.7 231.3 474 232.6M411.2 118.4C412.1 119.4 415.1 121.6 416.6 124.5C418 127.4 419.5 132.6 419.9 135.8C420.2 139 419.6 141.4 418.9 143.9C418.3 146.5 416.4 149.9 415.9 151.1M381.3 180.2C382 181.9 384.8 187.5 385.5 190.5C386.1 193.5 386.4 195.2 385.5 198.2C384.6 201.2 381.8 204.7 380.1 208.3C378.4 211.9 376.5 215.7 375.4 219.9C374.3 224.2 374 229.9 373.3 233.7C372.6 237.6 371.5 241.5 371.2 243M463.5 150.2C465.2 150.8 469.5 152.8 473.5 153.8C477.4 154.8 482.8 154.5 487 156C491.2 157.5 496.7 161.7 498.7 162.9M509.6 195.2C508.8 196.9 506.3 202.2 504.9 205.5C503.5 208.9 502.7 212.8 501.2 215.4C499.7 218.1 497.5 218.5 495.8 221.2C494 223.9 491.3 229.8 490.4 231.5M202.6 82C203.4 83.6 205.6 88.8 207.1 91.8C208.6 94.7 209.7 97.3 211.7 99.7C213.6 102 217.8 104.7 219.1 105.7M485.9 106.2C487.6 106.6 492.8 108.5 495.8 108.7C498.7 108.9 500.8 107.5 503.6 107.2C506.4 107 508.8 106.4 512.5 107.1C516.2 107.7 523.5 110.4 525.7 111M214.5 208.8C212.8 209.2 207.2 210.6 204.2 211.3C201.2 212.1 198.5 212.1 196.3 213.3C194 214.4 192.2 216.2 190.8 218.3C189.4 220.4 188.4 222.5 187.9 226.1C187.4 229.6 187.1 235.5 187.7 239.5C188.4 243.4 191.3 248.2 192 249.9M425.6 112.2C425.5 113.5 425.1 117.5 425.3 120.4C425.4 123.3 425.2 126.1 426.6 129.4C428.1 132.7 432.2 136.6 434.1 140.3C436 144 435.7 148.3 437.9 151.7C440.1 155.1 444.8 157.7 447.2 160.6C449.7 163.5 451.8 167.8 452.7 169.2M455.5 151.7C457.2 152.6 461.8 155.9 465.7 157C469.6 158 474.7 156.9 478.9 158.2C483.1 159.5 488.7 163.8 490.7 165M287.3 89.7C286 91.6 282.2 98.2 279.6 100.7C277 103.3 275.1 104.1 271.6 105C268 105.8 262.1 104.8 258.4 105.7C254.6 106.7 252.1 108.1 249 110.5C245.8 112.9 242.5 117.9 239.7 120.1C236.9 122.3 233.4 123.2 232.1 123.9M250.7 223.4C252.1 224 256 225 258.6 227C261.2 229.1 264 232.5 266.2 235.5C268.5 238.6 271.1 242.2 272.2 245.5C273.3 248.9 273.3 252.2 272.8 255.8C272.4 259.4 271.1 264 269.6 267.2C268 270.5 264.6 274 263.6 275.3M449.4 170C450.6 171.4 454.7 175.9 456.7 178.4C458.7 180.9 459.6 183.3 461.6 184.9C463.6 186.6 466.3 187.1 468.6 188.4C470.9 189.7 474.3 192.1 475.4 192.8M538.3 190.2C540.1 190.8 545.6 192 549.2 193.5C552.8 195 556.3 198.1 560 199.2C563.6 200.2 567.1 199.8 571.1 199.7C575.1 199.7 581.7 198.9 583.8 198.7M482.8 219.7C484.2 219.5 488.7 219.1 491.1 218.2C493.5 217.3 494.1 215.4 497.2 214.3C500.2 213.1 505.4 212.1 509.5 211.4C513.7 210.7 518.6 210.4 522.3 210.2C525.9 210.1 528.6 211 531.3 210.6C534 210.2 537.3 208.3 538.4 207.9M460.9 113.4C462.1 114.5 466.2 117.7 467.8 119.9C469.4 122.1 469.8 123.4 470.5 126.7C471.2 130.1 472.1 136 472 140C472 144.1 470.8 147.8 470.3 151.1C469.9 154.4 470.1 156.6 469.2 160C468.2 163.5 465.4 169.8 464.6 171.7M205.8 162C207.3 162.9 211.5 165.9 215.2 167.3C218.8 168.7 223.6 170.1 227.8 170.2C232.1 170.4 237.3 168.9 240.4 168C243.5 167 244.1 166.6 246.5 164.6C248.9 162.5 252.5 157.5 255 155.7C257.6 153.8 260.6 153.8 261.7 153.4M367.3 157.8C365.4 158.1 359.8 159.9 356.3 159.7C352.8 159.5 349.1 157.7 346.1 156.7C343.2 155.7 341.6 155.7 338.5 153.8C335.5 151.9 329.7 146.7 328 145.3M276.2 107.3C273.9 107.8 266.1 109.4 262.5 110.1C259 110.7 257.3 110.6 254.8 111.2C252.4 111.8 248.8 113.2 247.6 113.6M521.1 219.8C520 220.3 516.7 221.3 514.5 222.7C512.3 224.1 510.6 227 507.8 228.4C505 229.9 501.4 230.2 497.7 231.6C494.1 233 489 235 485.7 237C482.4 239 480.8 241.2 477.9 243.6C474.9 245.9 469.8 249.8 468.2 251.1M459.4 181.8C460.4 183.7 463.3 190 465.1 193.5C467 197.1 468.4 200.1 470.4 203.1C472.3 206 475.1 208.4 476.8 211C478.6 213.6 479.2 216.3 481 218.8C482.8 221.2 486.4 224.4 487.4 225.5M420.6 189.6C421 191.5 422.6 198 422.7 201.3C422.8 204.6 421.3 206.5 421.4 209.3C421.4 212 422 214.8 422.9 217.9C423.7 221 424.9 225 426.5 227.9C428.1 230.8 431.4 233.9 432.4 235.1M261.3 232.7C260.6 234.5 257.8 240.4 257 243.5C256.1 246.6 256 248.7 256.3 251.5C256.6 254.3 258.4 258.9 258.8 260.3M299.3 124C301.5 124.3 309 125.3 312.4 125.7C315.8 126.1 316.8 125.5 319.5 126.3C322.2 127.1 327 129.9 328.6 130.6M273 233.6C274.5 234.7 279 237.8 282.4 239.7C285.8 241.7 290.4 243.1 293.2 245.3C296.1 247.5 298.5 251.8 299.6 253.1M396.5 197.7C396.6 199.6 397.8 205.5 397.4 209.2C397 213 395.1 217.1 394 220.2C393 223.4 391.5 225.6 390.8 228.2C390.2 230.8 390.4 234.8 390.3 236.1M346.8 121.9C346.2 123.4 344.6 128.4 343.2 131C341.9 133.6 340.9 135.6 338.7 137.7C336.6 139.9 332.7 140.9 330.4 143.9C328.1 146.9 326.5 151.9 324.7 155.6C322.9 159.3 321.9 162.8 319.4 166C316.9 169.1 311.1 173.3 309.5 174.7M310.1 83.2C309.1 84.8 305.6 88.8 304.2 92.3C302.7 95.8 302.8 101 301.2 104.4C299.6 107.8 295.6 111.3 294.5 112.6M230.3 170.7C230.1 172.6 229.8 178.5 228.7 182C227.6 185.5 225.5 187.8 223.9 191.5C222.2 195.2 219.8 200.1 218.8 204.2C217.8 208.2 217.9 211.9 217.8 215.9C217.6 219.9 217 224.1 218 228.3C218.9 232.4 222.4 238.9 223.3 241.1M319.7 90.4C320.9 90.9 324.2 91.5 326.6 93.5C329 95.4 331.9 99 334.2 101.9C336.4 104.9 337.8 108.9 340 111.3C342.3 113.8 344.2 114.6 347.5 116.7C350.7 118.7 356.1 120.4 359.3 123.5C362.5 126.6 365.6 133.3 366.9 135.2M532.4 153.2C533.7 154.6 537.6 158.9 540.2 161.6C542.8 164.3 544.6 167 547.8 169.5C551.1 171.9 557.8 175.2 559.8 176.3M318.9 180.6C317.6 181.5 313.8 184.2 311.4 185.7C309.1 187.3 307.4 188.8 304.7 189.9C302.1 190.9 298.5 191.8 295.5 191.9C292.5 192.1 289.6 191 286.7 190.8C283.7 190.6 280.7 190.6 277.9 190.7C275 190.8 271 191.2 269.6 191.3M195.7 193.5C196.5 194.8 198.7 198.5 200.4 201.4C202.2 204.4 203.6 208.3 206.4 211.1C209.2 214 214 217.1 217.3 218.7C220.5 220.4 224.6 220.7 226.1 221.1M330.1 94.8C329.5 96 328.4 99.4 326.4 101.9C324.4 104.4 319.8 107.3 318 109.7C316.3 112.1 317.5 113.9 315.7 116.4C314 118.9 309.6 122.1 307.5 124.6C305.5 127 304.3 130.1 303.6 131.2M245 117.8C243.7 118.4 240.1 119.8 237.2 121.2C234.4 122.7 231.2 124.9 227.9 126.5C224.5 128.2 220.1 130.5 217 131.2C213.9 131.9 212.3 131.6 209.4 130.7C206.5 129.7 201.4 126.5 199.8 125.7M418.5 127.6C418.5 129.7 418.3 135.6 418.3 139.8C418.4 144.1 418.9 149.3 419 153C419.1 156.7 418.6 159.1 418.9 161.8C419.2 164.6 420.6 168.3 420.9 169.6M368.1 90.7C367.9 92.1 366.9 96.1 367.2 99.3C367.5 102.6 369.4 107.1 369.9 110.2C370.3 113.4 369.5 115 369.9 118.3C370.3 121.6 371.7 128.1 372.1 130M369.7 127.6C370.1 129.9 370.7 137.3 372.2 141.1C373.8 144.9 377.2 147.8 378.8 150.5C380.5 153.1 380.9 154 382.1 156.9C383.4 159.8 385.8 164.5 386.4 167.8C387 171.2 386.8 174.1 385.8 177.1C384.8 180.2 381.2 184.7 380.3 186.2M365.1 220.7C366.6 221.1 371.4 221.6 374.2 222.9C377.1 224.1 379.3 226.4 382.2 228.2C385 230.1 388.7 232 391.2 234C393.6 236 394.7 238.1 396.8 240.3C399 242.5 401.3 244.5 404 247.2C406.6 250 411.2 255.1 412.6 256.6M297.7 209.9C297.6 211.5 296.8 216 297.1 219.3C297.3 222.6 298.2 226.6 299.4 229.5C300.6 232.3 302.9 234 304.2 236.3C305.5 238.7 306.8 241.1 307.2 243.6C307.6 246.1 306.7 249.9 306.6 251.2M545 143.4C544.7 144.6 543.7 148.2 543.4 150.6C543.1 153 542.6 154.3 543.3 157.6C543.9 161 546.2 166.5 547.2 170.5C548.2 174.6 549.2 177.8 549.3 181.9C549.4 186 548.6 191.2 547.9 195.2C547.3 199.3 545.9 204.4 545.5 206.3M415.1 189.5C415 191.5 414.9 197.2 414.9 201.2C414.9 205.2 414.6 210.2 415.2 213.5C415.8 216.9 418.1 219.8 418.6 221.1M207.8 201.7C205.8 202.5 199.8 205.6 196 206.6C192.3 207.7 188.4 207.1 185.2 207.9C182 208.6 178.1 210.5 176.6 211.1M343 131C343.4 132.7 345.2 137.6 345.3 141.4C345.5 145.2 344.3 149.7 344 153.7C343.8 157.7 343.8 163.6 343.7 165.6M337 92C336.1 93.4 333 97.2 331.9 100.5C330.8 103.8 330.3 108.7 330.3 111.9C330.2 115.1 330.5 117.6 331.4 119.9C332.3 122.1 334.9 124.6 335.6 125.6M435.1 100.5C433.9 101 430.4 102.3 427.8 103.4C425.2 104.5 422.6 105.9 419.6 107C416.7 108.2 411.7 109.9 410.1 110.5M456.3 224.6C456.6 225.9 457.4 228.9 457.8 232.1C458.1 235.3 458.2 239.8 458.5 244C458.9 248.3 458.9 253.1 459.9 257.5C460.9 261.9 463.8 268.3 464.6 270.4M446.8 83.4C448.4 83.3 452.2 82.8 456 82.8C459.8 82.8 465.7 82.5 469.7 83.3C473.7 84 478.4 86.7 480.2 87.3M305.9 228.7C304.9 229.5 302.2 232.3 299.7 233.7C297.2 235.1 294.2 236.2 290.8 237.2C287.5 238.3 283.1 239 279.8 239.9C276.4 240.9 274.3 242.4 270.5 242.9C266.7 243.5 261 243.8 256.9 243.4C252.9 243 248.1 241.1 246.3 240.6M297.5 91C295.6 90.4 289.2 87.9 286 87.6C282.7 87.3 281.2 89.1 278.1 89.1C274.9 89.2 270.1 88.7 267.1 87.6C264 86.6 262.5 84.2 259.9 82.6C257.3 81 252.9 78.8 251.5 78M465.9 117.9C466.4 119.3 466.9 123.2 468.8 126.3C470.7 129.5 474.9 133.2 477.2 136.8C479.4 140.5 481.3 146.4 482.2 148.3M296.2 103.4C294.4 104.6 289 108.7 285.3 110.4C281.6 112.1 277.3 113.2 273.9 113.5C270.4 113.7 267.9 111.8 264.6 112C261.3 112.3 255.8 114.4 254.1 114.9M475 112.7C474.3 113.7 472.5 116 470.9 118.8C469.2 121.6 467.6 126.5 465.2 129.3C462.8 132.2 458.5 133.5 456.4 136.1C454.3 138.7 453.1 143.5 452.4 144.9M384.8 164.7C386 166.1 390.1 169.5 392.1 173C394 176.5 395.1 181.8 396.3 185.5C397.5 189.2 398.9 193.7 399.4 195.4M401.9 110.9C402.8 112.1 405.6 115.5 407.4 118C409.2 120.6 411.1 122.6 412.7 126C414.2 129.4 414.7 134.4 416.5 138.4C418.4 142.4 422.5 147.9 423.7 149.8M368.1 215.9C368.3 217.2 368.9 221 369.1 223.9C369.3 226.8 369.2 230.6 369.2 233.3C369.3 236.1 368.2 237.2 369.2 240.5C370.3 243.7 374.3 249.1 375.5 252.9C376.7 256.7 376.3 260.1 376.5 263.3C376.7 266.5 376.8 270.6 376.8 272.1M468.6 147.6C467.5 148.1 464.1 149.2 462 150.5C459.8 151.9 457.3 153.9 455.7 156C454.1 158 454.1 159.6 452.6 162.6C451 165.6 447.3 172.2 446.3 174.1M355.8 228.4C353.9 228.3 348 228.6 344.4 227.5C340.7 226.4 337.2 222.9 333.9 221.8C330.7 220.7 326.3 221 324.7 220.9M276.7 95.5C274.9 96.7 268.7 100.4 265.8 102.5C262.9 104.5 261.5 106.4 259.2 108C256.9 109.5 255.4 111 251.9 111.7C248.4 112.4 242.2 111.3 238.3 112.2C234.4 113.1 231.5 114.5 228.6 117.1C225.7 119.8 222.1 126.2 220.8 128M285.4 161.2C285 162.4 284.6 165.6 283 168.8C281.4 172 278 177.2 275.7 180.3C273.5 183.3 272.2 184.5 269.6 187C267.1 189.5 262.7 192.5 260.5 195.3C258.3 198.1 257.5 201 256.6 203.7C255.7 206.4 255.3 210.1 255.1 211.4M363.9 107.7C364.8 109.8 367.4 115.8 369.2 119.9C371 123.9 373.7 128.7 374.9 132C376 135.4 376.1 137.5 376 140C376 142.6 374.8 146.2 374.6 147.4M412.2 139.4C410.1 140.2 402.6 142.6 399.4 143.8C396.2 145 395.5 144.6 393 146.9C390.4 149.2 386.3 154.4 384.1 157.4C381.9 160.4 380.7 162.1 379.8 164.9C378.8 167.7 378.6 170.8 378.4 174.4C378.3 178 378.7 184.5 378.8 186.5M258.1 151.6C256.7 151.5 252.1 151.3 249.3 151.4C246.5 151.4 244.6 151.2 241.2 151.9C237.8 152.6 232.2 154.4 228.9 155.6C225.6 156.8 224.1 157.9 221.6 159.2C219 160.5 216 162.6 213.3 163.4C210.6 164.2 206.8 163.8 205.5 163.9M538.7 90.4C536.6 91 530 92 526.3 93.8C522.6 95.6 519.8 99.7 516.5 101.3C513.3 102.8 509.6 102.2 506.7 103.1C503.7 104 500.1 106 498.7 106.6M278.5 142.1C279.8 143.6 283.2 148.3 286.3 151.3C289.5 154.2 293.4 157.9 297.3 159.7C301.2 161.5 306.4 161.5 309.8 161.9C313.2 162.3 316.4 162 317.8 162M195.5 210.6C195.5 211.8 195.6 215.2 195.9 217.9C196.2 220.6 196 223.3 197.2 226.7C198.4 230.1 201.4 235 203 238.2C204.6 241.5 206.1 244.7 206.7 246M256.5 174.7C255.2 175.1 251.5 175.4 248.6 176.9C245.7 178.5 242 182.1 239.2 183.9C236.4 185.8 234 186.6 231.9 188C229.8 189.4 229 190.9 226.5 192.6C224.1 194.2 221 196.5 217.3 197.8C213.5 199 206.2 199.6 204 200M377 135.5C378.4 136.2 383.3 138.4 385.8 140C388.2 141.6 389.7 143.3 391.6 145.3C393.5 147.4 394.8 149.2 397 152.2C399.2 155.3 401.9 160.8 404.9 163.7C408 166.5 411.8 167.3 415.4 169.4C418.9 171.5 424.4 175.3 426.2 176.5M320 226.1C318.2 227 313.2 230.3 309.3 231.6C305.4 232.9 300.4 232.7 296.4 233.7C292.4 234.7 287 237 285.1 237.7M328.8 198.1C330.2 199.1 334.4 202.2 337.2 204.4C340 206.5 343.3 209.1 345.6 210.9C348 212.8 350.2 214.7 351.1 215.5M534.8 116.3C536.4 117 542.4 118.8 544.8 120.4C547.3 121.9 548.2 122.9 549.6 125.7C551 128.5 552.6 135.4 553.3 137.3M286.7 211.4C285.8 213.2 282.4 218.1 281.4 222.1C280.5 226.1 281.2 231.8 280.7 235.2C280.3 238.5 278.9 239.3 278.7 242.2C278.6 245.1 279.5 249.4 279.8 252.6C280.2 255.8 279.8 258.6 280.8 261.5C281.7 264.5 284.6 268.8 285.3 270.2"/>
<path d="M463.3 84.9C463.2 86 462.9 89.8 462.6 91.7C462.4 93.6 462.5 94.4 461.9 96C461.3 97.5 460 99.3 459.1 101C458.1 102.6 456.8 104.2 456.2 105.9C455.6 107.7 455.5 109.7 455.5 111.6C455.5 113.5 455.9 115.9 456.2 117.3C456.6 118.8 456.8 119.2 457.6 120.2C458.5 121.1 460.4 122.2 461.2 123C462 123.9 461.7 124.6 462.6 125.2C463.6 125.8 465.5 126 466.9 126.6C468.3 127.2 469.7 128 471.2 128.7C472.6 129.5 474.1 130.4 475.4 130.9C476.8 131.4 477.6 131.1 479 131.6C480.4 132.1 482.5 133.6 484 133.7C485.5 133.9 486.7 132.9 488.3 132.3C489.8 131.7 491.8 131 493.3 130.2C494.7 129.3 495.9 128.4 496.8 127.3C497.8 126.3 498.7 125.1 499 123.8C499.2 122.5 498 120.7 498.2 119.5C498.5 118.3 499.3 117.5 500.4 116.6C501.5 115.8 503.2 115.1 504.7 114.5C506.1 113.9 507.6 113.7 508.9 113.1C510.2 112.5 511.4 111.8 512.5 110.9C513.6 110.1 514.5 109.2 515.3 108.1C516.2 107 516.8 105.6 517.5 104.5C518.2 103.5 518.6 102.3 519.6 101.7C520.7 101.1 522.2 101.2 523.9 101C525.6 100.7 527.7 100.5 529.6 100.2C531.5 100 533.2 100.1 535.3 99.5C537.4 98.9 541.2 99.1 542.4 96.7C543.6 94.2 542.4 86.8 542.4 84.9Z" fill="#94c9f8"/>
<path d="M542.4 187.6C541.5 187.9 538.4 188.9 536.7 189.7C535.1 190.5 534.1 191.7 532.4 192.5C530.8 193.4 528.5 194.2 526.7 194.7C525 195.2 523.2 194.9 521.8 195.4C520.3 195.9 519.3 196.8 518.2 197.5C517.1 198.2 516.3 199 515.3 199.7C514.4 200.4 513.6 201.1 512.5 201.8C511.4 202.5 510 203.1 508.9 203.9C507.9 204.8 506.7 205.7 506.1 206.8C505.5 207.9 506.2 209.4 505.4 210.4C504.5 211.3 502.3 211.5 501.1 212.5C499.9 213.4 499.4 215.1 498.2 216.1C497.1 217 495.3 217.6 494 218.2C492.7 218.8 491.4 219 490.4 219.6C489.5 220.2 489 220.8 488.3 221.8C487.6 222.7 486.7 223.3 486.1 225.3C485.6 227.3 475.8 232.4 485.1 233.9C494.5 235.3 532.9 233.9 542.4 233.9Z" fill="#94c9f8"/>
<path d="M535.3 182.9C536.5 182.9 541.2 182.1 542.4 182.9C543.6 183.6 543.2 186.6 542.4 187.1C541.6 187.7 538.3 186.3 537.4 186.1Z" fill="#94c9f8"/>
<path d="M508.2 190.4C508.5 189.8 508.9 187.9 509.6 186.8C510.4 185.8 511.1 184.5 512.5 184C513.9 183.5 517.6 183.7 518.2 184C518.8 184.3 517.1 185.1 516.1 185.7C515 186.4 513.1 186.9 512.1 187.8C511 188.7 510 190.6 509.6 191.1Z" fill="#94c9f8"/>
<path d="M535.3 184.9C535.2 183.9 534.3 180.8 534.6 179.2C534.8 177.5 535.9 176.1 536.7 174.9C537.5 173.7 538.6 172.7 539.6 172C540.5 171.4 541.9 168.8 542.4 170.9C542.9 173 542.4 182.5 542.4 184.9Z" fill="#94c9f8"/>
<path d="M326.5 191.8C326.9 192.2 328.1 192.9 328.7 194C329.3 195 330.1 196.9 330.1 198.2C330.1 199.6 329.4 201.3 328.7 201.8C328 202.3 326.5 201.8 325.8 201.1C325.1 200.4 324.5 198.7 324.4 197.5C324.3 196.3 325 194.6 325.1 194Z" fill="#94c9f8"/>
<path d="M462.3 94.1 L465.8 95.4 L470 98.5 L469.2 99.3 L465.2 96.8 L462.2 95.4Z" fill="#eef3fb"/>
<g fill="none" stroke-linecap="round" stroke-linejoin="round">
<path stroke="#b9bdc9" stroke-width="0.55" d="M222.5 85.3C223 86.4 225 89.9 225.4 91.7C225.7 93.5 224.2 95 224.6 96C225.1 96.9 227.1 96.7 228.2 97.4C229.3 98.1 230.8 99.2 231.1 100.2C231.3 101.3 230.5 102.1 229.6 103.8C228.8 105.5 227.3 108 226.1 110.2C224.9 112.5 223.6 115 222.5 117.3C221.4 119.7 220.6 122.3 219.7 124.5C218.7 126.6 217.6 128.3 216.8 130.2C216 132.1 215 134.9 214.7 135.9M387.1 85.3C386.6 86 389.5 88.7 384.2 89.6C379 90.4 361.1 89.4 355.7 90.3C350.4 91.1 353.8 92.9 352.2 94.5C350.5 96.2 347.7 98.1 345.8 100.2C343.9 102.4 342.2 105.6 340.8 107.4C339.4 109.2 338.8 109.5 337.2 110.9C335.7 112.4 333.7 114.5 331.5 115.9C329.4 117.3 326.5 118.5 324.4 119.5C322.3 120.4 320.1 120.3 318.7 121.6C317.3 122.9 316.8 126 315.8 127.3C314.9 128.6 313.5 129.1 313 129.5M214.7 134.3C214.9 135.1 216.2 137.7 216.1 139.3C216 140.8 215.1 142.1 214 143.5C212.8 145 210.8 146.4 209 147.8C207.2 149.2 204.7 150.7 203.3 152.1C201.8 153.5 200.5 154.7 200.4 156.4C200.3 158 201.7 160.4 202.6 162.1C203.4 163.7 204.1 164.9 205.4 166.3C206.7 167.8 208.4 169 210.4 170.6C212.4 172.3 215.4 175.1 217.5 176.3C219.7 177.5 221.6 177.3 223.2 177.7C224.9 178.2 225.8 178.5 227.5 179.2C229.2 179.9 231.1 181.1 233.2 182C235.3 183 239.1 184.4 240.3 184.9M209 183.3C209.1 184.6 209.7 188.6 209.7 191.1C209.7 193.6 209.3 195.9 209 198.2C208.6 200.6 207.5 203 207.5 205.4C207.5 207.7 209 209.9 209 212.5C209 215.1 207.8 219.6 207.5 221M246 188.3C247.2 188.4 250.8 188.6 253.1 189C255.5 189.3 257.9 189.6 260.3 190.4C262.6 191.2 264.8 193.9 267.4 194C270 194.1 273.8 192.1 275.9 191.1C278.1 190.2 278.8 188.5 280.2 188.3C281.6 188 282.8 189.2 284.5 189.7C286.2 190.2 288.8 191.6 290.2 191.1C291.6 190.6 292.3 188.2 293 186.8C293.8 185.5 294.2 183.9 294.5 183.3M312.3 195.4C313.1 195.2 316 194.9 317.3 194C318.6 193 319.6 190.4 320.1 189.7"/>
<path stroke="#a9cff6" stroke-width="0.55" d="M343.6 85.3C343.4 86.6 342.9 90.6 342.2 93.1C341.5 95.6 340.2 97.9 339.4 100.2C338.5 102.6 338.1 105.5 337.2 107.4C336.4 109.3 334.8 110.9 334.4 111.6M442 94.5C443 94.7 446.1 95.4 448.4 95.3C450.6 95.1 453.2 94 455.5 93.8C457.8 93.7 460.8 94.4 461.9 94.5M311.6 134.3C311.1 135.4 310.1 138.7 308.7 140.7C307.3 142.7 304.9 144.5 303 146.4C301.1 148.3 299.2 150.2 297.3 152.1C295.4 154 293.3 155.9 291.6 157.8C290 159.7 288.5 161.6 287.3 163.5C286.2 165.4 284.5 167.3 284.5 169.2C284.5 171.1 286.4 173 287.3 174.9C288.3 176.8 289.5 178.9 290.2 180.6C290.9 182.3 291.4 184.2 291.6 184.9"/>
<path stroke="#9ccaf8" stroke-width="0.95" d="M427.7 107.4C427.1 108.1 425.7 110 424.1 111.6C422.6 113.3 420.3 115.8 418.4 117.3C416.5 118.9 414.6 120.1 412.7 120.9C410.8 121.7 408.9 122 407 122.3C405.1 122.7 403.2 122.5 401.3 123C399.4 123.6 397.5 124.9 395.6 125.9C393.7 126.8 391.6 127.8 389.9 128.7C388.3 129.7 386.9 130.4 385.7 131.6C384.5 132.8 383.3 135.2 382.8 135.9M446.2 85.3C446 86.1 445.5 88.7 444.8 90.3C444.1 91.8 443 93.2 442 94.5C440.9 95.9 439.9 97.2 438.4 98.1C436.9 99.1 434.7 99.5 432.7 100.2C430.7 101 427.4 102 426.3 102.4M382.8 134.3C382.3 135.1 381.2 137.7 380 139.3C378.8 140.8 377.4 142.1 375.7 143.5C374 145 371.9 146.6 370 147.8C368.1 149 366 149.7 364.3 150.7C362.6 151.6 361.7 152.3 360 153.5C358.4 154.7 356 156.1 354.3 157.8C352.7 159.5 351.2 161.6 350 163.5C348.9 165.4 348.1 167.3 347.2 169.2C346.2 171.1 346 173.2 344.3 174.9C342.7 176.6 339.4 177.5 337.2 179.2C335.1 180.8 332.5 183.9 331.5 184.9M313.7 203.9C312.9 204.4 310.3 205.8 308.7 206.8C307.2 207.7 306.1 208.5 304.4 209.6C302.8 210.8 300.4 212.5 298.7 213.9C297.1 215.3 295.9 216.8 294.5 218.2C293 219.6 291.4 221.3 290.2 222.5C289 223.7 288.3 223.7 287.3 225.3C286.4 227 285 231.3 284.5 232.4M325.8 183.3C325.1 184.4 323 187.7 321.5 189.7C320.1 191.7 318.5 193.7 317.3 195.4C316.1 197.1 315.3 198.5 314.4 199.7C313.6 200.9 312.6 202 312.3 202.5"/>
<path stroke="#fbe2a6" stroke-width="0.55" d="M199 101.7C200.4 101.6 204.9 100.8 207.5 101C210.2 101.1 212.1 102.3 214.7 102.4C217.3 102.5 220.7 102 223.2 101.7C225.7 101.3 228.6 100.5 229.6 100.2M256 90.3C255.9 91.9 255.3 97.2 255.3 100.2C255.3 103.3 255.4 106.4 256 108.8C256.6 111.2 258.5 111.7 258.8 114.5C259.2 117.3 258.3 123.8 258.1 125.6M260.3 85.3 L261.7 94.5M270.2 85.3C270.4 86.8 270.7 91.7 271 94.5C271.2 97.4 271.6 101.1 271.7 102.4M283.1 85.3C283.3 86.8 284.5 91.6 284.5 94.5C284.5 97.5 283.1 99.8 283.1 103.1C283.1 106.4 284.3 112.6 284.5 114.5M239.6 100.2C240.7 100.5 243.6 101.7 246 101.7C248.4 101.7 252.6 100.5 253.9 100.2M253.9 104.5C255.2 104.4 258.3 103.8 261.7 103.8C265.1 103.9 272 104.6 274.1 104.8M274.1 104.8C275.4 104.6 278.6 104.2 281.6 103.8C284.7 103.4 290.6 102.6 292.3 102.4M224.6 135.9C225.1 134.2 226.1 129 227.5 125.9C228.9 122.8 231.5 120.2 233.2 117.3C234.9 114.5 236.4 111.6 237.5 108.8C238.5 105.9 239.3 101.7 239.6 100.2M215.4 105.9C216.5 106.2 219.8 106.7 221.8 107.4C223.8 108.1 226.5 109.7 227.5 110.2M261.7 110.2C261.5 111.4 260.7 114.8 260.3 117.3C259.8 119.9 259.1 124.2 258.8 125.6M266 124.5 L267.4 135.9M287.3 120.2C287.8 119.2 289.1 115.9 290.2 114.5C291.3 113.1 293.2 112.1 293.8 111.6M304.4 85.3C304.3 86.1 304 88.5 303.7 90.3C303.5 92 303.1 94.8 303 95.7M278.8 120.2C279.3 121.4 280.7 124.7 281.6 127.3C282.6 129.9 284 134.4 284.5 135.9M199 114.5C199.9 114.3 203 112.6 204.7 113.1C206.4 113.5 208.3 116.6 209 117.3M240.3 128.7C241.3 128.5 243.9 127.6 246 127.3C248.1 127.1 251.7 127.3 252.9 127.3M239.6 120.2C240.7 120.4 243.8 121.3 246 121.6C248.2 122 251.7 122.2 252.9 122.3M303 95.7C303.8 96.1 306.2 97.5 308 98.1C309.8 98.8 312.8 99.3 313.7 99.5M203.3 94.5C203 96 201.6 100 201.8 103.1C202.1 106.2 204.2 111.4 204.7 113.1M297.3 111.4C297.6 110 297.8 105.7 298.7 103.1C299.7 100.5 302.3 96.9 303 95.7M328.7 110.2C328.9 111.3 328.9 115 330.1 116.6C331.3 118.3 334.1 120.2 335.8 120.2C337.5 120.2 339.2 117.9 340.1 116.6C340.9 115.3 340.7 113.1 340.8 112.4M313 91.7C313.9 91.5 316.6 90.3 318.7 90.3C320.8 90.3 323.7 91.9 325.8 91.7C328 91.5 330.1 89.9 331.5 88.8C332.9 87.8 333.9 85.9 334.4 85.3M352.9 105.9C352.7 107.4 351.2 111.6 351.5 114.5C351.7 117.3 353.8 121.6 354.3 123M377.1 98.8C377.4 100.2 378.8 104.8 378.5 107.4C378.3 110 377.1 113.3 375.7 114.5C374.3 115.7 371.2 114.5 370.3 114.5M387.1 97.4C386.9 98.8 385.4 103.3 385.7 105.9C385.9 108.6 387.6 110.8 388.5 113.1C389.5 115.3 390.9 118.4 391.4 119.5M355.7 135.9C356.2 134.7 357.9 130.3 358.6 128.7C359.3 127.2 359.8 127 360 126.6M370.3 104.5C371.7 105 376 107.1 378.5 107.4C381.1 107.6 384.5 106.2 385.7 105.9M397.1 115.9C397.3 114.5 397.3 110.6 398.5 107.4C399.7 104.2 403.2 98.5 404.2 96.7M427.7 88.8C426.6 89.3 423.3 91.2 421.3 91.7C419.3 92.2 416.5 91.7 415.6 91.7M327.2 135.9C327 134.4 326.3 130.3 325.8 127.3C325.3 124.4 324.6 119.6 324.4 118.1M342.9 130.2C344.1 130.4 347.9 130.6 350 131.6C352.2 132.5 354.8 135.2 355.7 135.9M360 103.1C359.8 101.7 358.6 97.5 358.6 94.5C358.6 91.6 359.8 86.8 360 85.3M387.1 124.5C388 124.9 390.9 125.9 392.8 127.3C394.7 128.7 397.3 131.6 398.5 133C399.7 134.4 399.7 135.4 399.9 135.9M441.2 113.8C442.4 113.7 446.2 113.3 448.4 113.1C450.5 112.8 453.1 112.5 454.1 112.4M427 114.5C428.2 114.6 431.7 115.3 434.1 115.2C436.5 115.1 440.1 114 441.2 113.8M504.7 114.5C505 115.4 506 118.8 506.8 120.2C507.6 121.6 509.2 122.6 509.6 123M525.3 114.5C526.5 114.3 530.2 112.4 532.4 113.1C534.7 113.7 537.8 117.6 538.9 118.5M519.6 110.2C518.4 110.5 514.6 110.9 512.5 111.6C510.4 112.4 507.7 114 506.8 114.5M439.8 121.6C441 121.9 444.6 122.3 446.9 123C449.3 123.8 451.9 124.7 454.1 125.9C456.2 127.1 458.3 128.5 459.8 130.2C461.2 131.8 462.1 134.9 462.6 135.9M427 91.7C427.9 91.9 430.6 92.2 432.7 93.1C434.8 94.1 438.6 96.7 439.8 97.4M528.2 123C529.4 122.8 533 122.3 535.3 121.6C537.5 120.9 540.6 119.2 541.7 118.8M504.7 127.3C506 127.6 509.8 128 512.5 128.7C515.2 129.5 518.3 131.6 521 131.6C523.8 131.6 527.6 129.2 528.9 128.7M198.3 176.3C199.6 176.6 203.6 177 206.1 177.7C208.6 178.5 210.9 179.4 213.2 180.6C215.6 181.8 219.2 184.2 220.4 184.9M207.5 184.9C208.3 184.4 210.2 182.4 211.8 182C213.5 181.7 216.6 182.6 217.5 182.7M266 140.7C266.2 142.1 266.9 145.7 267.4 149.2C267.9 152.8 268.5 158 268.8 162.1C269.2 166.1 269.3 169.7 269.5 173.5C269.8 177.3 270.1 183 270.2 184.9M227.5 151.4C228.9 151.5 233.2 152.2 236 152.1C238.9 152 242.2 151.6 244.6 150.7C247 149.7 249.6 147.1 250.6 146.4M220.4 161.4C220.1 159.8 218.7 155.1 218.9 152.1C219.2 149.1 220.4 146.3 221.8 143.5C223.2 140.8 226.5 137 227.5 135.7M256 169.2C257.2 169 260.3 168.1 263.1 167.8C265.9 167.4 270.3 167.1 272.8 167.1C275.3 167.1 277.2 167.7 278.1 167.8M287.3 165.6C287.8 166.7 288.8 170 290.2 172C291.6 174.1 294.9 176.8 295.9 177.7M298.7 145C298.5 146.2 297.3 149.5 297.3 152.1C297.3 154.7 299 158 298.7 160.6C298.5 163.3 296.4 166.6 295.9 167.8M307.3 134.3C307.5 135.4 308.7 138.7 308.7 140.7C308.7 142.7 307.5 145.4 307.3 146.4M204.7 165.6C204.9 166.7 205.9 170 206.1 172C206.4 174.1 206.1 176.8 206.1 177.7M256.7 149.2C257.5 149.5 259.9 150.7 261.7 150.7C263.5 150.7 266.4 149.5 267.4 149.2M281.6 149.2C283.1 149.5 287.6 150.2 290.2 150.7C292.8 151.1 296.1 151.9 297.3 152.1M312.3 177.7C313.8 177.5 318.6 176.3 321.5 176.3C324.5 176.3 327.5 177.3 330.1 177.7C332.7 178.2 336 178.9 337.2 179.2M313 139.3C314.4 139.5 319.6 139.5 321.5 140.7C323.4 141.9 323.9 145.4 324.4 146.4M384.2 149.2C384.5 150.4 384.7 153.5 385.7 156.4C386.6 159.2 389.2 164.7 389.9 166.3M413.7 149.2C415 149.5 419 150 421.3 150.7C423.6 151.4 426.6 153 427.7 153.5M334.4 154.9C333.2 155.2 329.6 156.4 327.2 156.4C324.9 156.4 322.6 154.9 320.1 154.9C317.6 154.9 313.6 156.1 312.3 156.4M317.3 169.6C317.5 171 318.7 175.2 318.7 177.7C318.7 180.3 317.5 183.7 317.3 184.9M341.8 146.4C342 147.8 343 152.2 342.9 154.9C342.9 157.7 341.7 161.5 341.5 162.8M401.3 147.1C401.6 148.4 401.7 153.6 402.8 154.9C403.8 156.3 406.9 154.9 407.8 154.9M365.7 149.2C365.7 148.3 365 146 365.7 143.5C366.4 141.1 369.3 135.8 370 134.3M391.4 172C392.6 171.8 396.1 172 398.5 170.6C400.9 169.2 404.4 164.7 405.6 163.5M421.3 166.3C420.3 167.1 417 168.7 415.6 170.6C414.2 172.5 413.1 175.4 412.7 177.7C412.4 180.1 413.3 183.7 413.5 184.9M426.3 143.5C427.4 143.4 430.9 142.8 432.7 142.8C434.5 142.8 436.3 143.4 437 143.5M456.9 160.6C458.1 160.4 461.9 159.9 464 159.2C466.2 158.5 468.8 156.8 469.7 156.4M464.8 155.9C465.6 157 468.2 159.6 469.7 162.1C471.3 164.5 473.1 166.8 474 170.6C475 174.4 475.2 182.5 475.4 184.9M427 153.5C427.7 154.7 430.1 158 431.3 160.6C432.5 163.3 433.4 165.2 434.1 169.2C434.8 173.2 435.3 182.3 435.5 184.9M541.7 153.5C540.6 153.3 536.8 153.5 535.3 152.1C533.7 150.7 532.9 146.2 532.4 145M469.7 141.4C470 142.5 470.5 145.8 471.2 147.8C471.9 149.8 473.5 152.6 474 153.5M448.4 152.8C448.1 151.5 446.2 147.5 446.9 145C447.7 142.5 451.7 139 452.6 137.8M486.8 165.2C487.1 166.6 488.3 170.2 488.3 173.5C488.3 176.7 487.1 183 486.8 184.9M440.5 166.3C441.8 166.6 445.2 167.5 448.4 167.8C451.6 168 457.9 167.8 459.8 167.8M204.7 189.7C204.5 191.1 203 194.8 203.3 198.2C203.5 201.7 205.6 208.3 206.1 210.4M247.4 194C247.7 195.2 248.9 198.2 248.9 201.1C248.9 203.9 247.7 209.4 247.4 211.1M256 194.7C256.2 196.2 257.4 201.1 257.4 203.9C257.4 206.8 256.2 210.5 256 211.8M231.8 191.8C231.5 192.9 230.1 196 230.3 198.2C230.6 200.5 231.7 203.3 233.2 205.4C234.7 207.5 238.3 209.9 239.3 210.8M264.5 210.4C264.8 211.7 266 215.8 266 218.2C266 220.6 264.9 222.2 264.5 224.6C264.2 227 264 231.1 263.8 232.4M281.6 209.4C281.4 210.6 280.2 214.2 280.2 216.8C280.2 219.3 281.4 223.3 281.6 224.6M247.4 211.1C247.7 212.5 248.9 216.1 248.9 219.6C248.9 223.2 247.7 230.3 247.4 232.4M298.7 203.9C299.2 205.4 300.6 209.6 301.6 212.5C302.5 215.3 303.5 217.7 304.4 221C305.4 224.4 306.8 230.5 307.3 232.4M217.5 203.9C217.3 205.4 216.1 209.6 216.1 212.5C216.1 215.3 217.3 219.6 217.5 221M418.4 183.3C418.9 184.8 419.7 190.3 421.3 192.5C422.8 194.8 426.6 196.1 427.7 196.8M412.7 203.9C414.2 204.2 418.8 205.4 421.3 205.4C423.8 205.4 426.6 204.2 427.7 203.9M321.5 206.1C321.8 207.6 323 212.3 323 215.3C323 218.4 321.8 223.1 321.5 224.6M348.6 205.4C348.7 206.6 349.3 210.2 349.3 212.5C349.3 214.8 348.7 217.8 348.6 218.9M377.1 206.8C377.2 208.2 378.1 212.4 377.8 215.3C377.6 218.3 376.1 221.8 375.7 224.6C375.3 227.5 375.7 231.1 375.7 232.4M387.1 188.3C387.3 189.7 388.5 193.7 388.5 196.8C388.5 199.9 387.3 205.1 387.1 206.8M313 189.7C313.9 189.2 316.6 187.8 318.7 186.8C320.8 185.9 324.6 184.5 325.8 184M348.6 189C348.4 190.3 347.2 194.1 347.2 196.8C347.2 199.6 348.4 203.9 348.6 205.4M358.6 206.1C358.5 207.2 357.9 210.5 357.9 212.5C357.9 214.5 358.7 214.9 358.6 218.2C358.5 221.5 357.4 230.1 357.2 232.4M387.1 206.8C387.3 208.5 387.6 213.8 388.5 216.8C389.5 219.7 392.1 223.3 392.8 224.6M407 213.2C408.5 212.9 413.2 212.4 415.6 211.1C418 209.8 420.3 206.3 421.3 205.4M426.3 205.4C427.6 205.1 431.5 203.9 434.1 203.9C436.7 203.9 440.7 205.1 442 205.4M447.9 194.3C448.7 195.4 450.9 199 452.6 201.1C454.4 203.2 456.4 205.6 458.3 206.8C460.2 208 462 208.2 464 208.2C466.1 208.2 469.4 207 470.5 206.8M445.5 194.7C446.5 196 450.5 199.8 451.2 202.5C451.9 205.3 450.3 208.2 449.8 211.1C449.3 213.9 448.6 216.1 448.4 219.6C448.1 223.2 448.4 230.3 448.4 232.4M471.2 209.6C472.4 209.9 475.7 210.6 478.3 211.1C480.9 211.5 484.7 212 486.8 212.5C489 213 490.4 213.7 491.1 213.9M426.3 216.8C427.6 216.7 431.7 215.6 434.1 216.1C436.5 216.5 439.5 219 440.5 219.6M480.9 192.8C481.4 193.7 482.3 196.6 484 198.2C485.7 199.9 488.6 201.5 491.1 202.5C493.7 203.6 497.9 204.3 499.2 204.7M458.3 206.8C458.6 208.2 459.1 212.4 459.8 215.3C460.5 218.3 462.1 223.1 462.6 224.6M491.1 193.7C490.9 192.8 489.7 190 489.7 188.3C489.7 186.5 490.9 184.1 491.1 183.3"/>
<path stroke="#fac85c" stroke-width="0.85" d="M199 91.7C199.7 92.2 201.8 94.2 203.3 94.5C204.7 94.9 206.2 94.3 207.5 93.8C208.9 93.4 210.2 92.6 211.1 91.7C212.1 90.7 212.8 89.2 213.2 88.1C213.7 87.1 213.8 85.8 214 85.3M209.7 85.3C209.9 86.4 210.5 89.4 211.1 91.7C211.7 94 212.5 96.4 213.2 98.8C214 101.2 215.4 103.8 215.4 105.9C215.4 108.1 214.3 109.7 213.2 111.6C212.2 113.5 210.4 115.7 209 117.3C207.5 119 205.9 120.2 204.7 121.6C203.5 123 202.7 124.5 201.8 125.9C201 127.3 200.2 129 199.7 130.2C199.2 131.4 199.1 132.5 199 133M238.9 85.3C239.1 86.4 240.2 89.2 240.3 91.7C240.4 94.2 239.7 97.4 239.6 100.2C239.5 103.1 239.7 105.9 239.6 108.8C239.5 111.6 239.4 114.5 239.2 117.3C238.9 120.2 238.6 122.8 238.2 125.9C237.8 129 237 134.2 236.8 135.9M252.4 85.3C252.6 86.6 252.9 90.6 253.1 93.1C253.4 95.6 253.8 97.6 253.9 100.2C253.9 102.9 253.6 105.9 253.4 108.8C253.3 111.6 253.1 114.5 252.9 117.3C252.6 120.2 252.3 123.5 252 125.9C251.7 128.3 251.4 129.9 251 131.6C250.6 133.3 249.8 135.2 249.6 135.9M246 85.3C245.3 86.4 242.7 90.4 241.7 91.7C240.8 93 240.6 92.9 240.3 93.1M233.9 85.3C234.6 86.1 237.1 89 238.2 90.3C239.3 91.6 240 92.6 240.3 93.1M248.2 85.3C249.5 86.1 253.7 88.7 256 90.3C258.3 91.8 259.9 93.1 261.7 94.5C263.5 96 265 97.5 266.7 98.8C268.3 100.1 270.4 101.4 271.7 102.4C272.9 103.4 272.9 103.7 274.1 104.8C275.3 105.9 277.3 107.2 278.8 108.8C280.3 110.4 281.6 112.6 283.1 114.5C284.5 116.4 285.7 118.2 287.3 120.2C289 122.2 291.6 125.2 293 126.6C294.5 128 294.8 127.7 296.2 128.7C297.6 129.8 300.2 131.8 301.6 133C303 134.2 304 135.4 304.4 135.9M252.9 127.3C253.9 127 256.7 126.1 258.8 125.6C261 125.1 263.6 124.9 266 124.5C268.3 124 271 123.5 273.1 122.8C275.2 122.1 277.1 121.2 278.8 120.2C280.5 119.2 281.6 117.8 283.1 116.6C284.5 115.4 285.9 113.9 287.3 113.1C288.8 112.2 290 111.9 291.6 111.6C293.3 111.4 295.4 111.2 297.3 111.4C299.2 111.5 301.4 112.4 303 112.4C304.7 112.3 305.5 111.5 307.3 110.9C309.1 110.3 312.6 109.2 313.7 108.8M303 95.7C302.1 95.5 298.9 94.3 297.3 94.5C295.8 94.8 294.6 96.1 293.8 97.4C292.9 98.7 292.6 100.7 292.3 102.4C292.1 104 292.1 105.8 292.3 107.4C292.6 108.9 293.5 110.9 293.8 111.6M303 95.7C303.7 95.1 305.9 93.2 307.3 92.4C308.7 91.6 310.5 91.3 311.6 91C312.6 90.6 313.3 90.4 313.7 90.3M312.3 93.8C311.4 94.9 308.8 98 307.3 100.2C305.7 102.5 304.1 105.4 303 107.4C301.9 109.4 301.6 110.5 300.9 112.4C300.2 114.3 299.5 116.4 298.7 118.8C298 121.1 297.2 123.8 296.6 126.6C296 129.5 295.4 134.3 295.2 135.9M199 131.6C200.2 131.7 203.7 132.1 206.1 132.3C208.5 132.5 210.9 133 213.2 133C215.6 133 218 132.2 220.4 132.3C222.7 132.4 224.8 133.2 227.5 133.7C230.2 134.3 235.2 135.3 236.8 135.6M345.8 85.3C345.4 86.6 344.5 90.4 343.6 93.1C342.8 95.9 341.7 99.1 340.8 101.7C339.8 104.3 338.8 106.8 337.9 108.8C337.1 110.8 336 111.9 335.8 113.8C335.6 115.7 335.9 118.4 336.5 120.2C337.1 122 338.3 122.8 339.4 124.5C340.4 126.1 341.7 128.3 342.9 130.2C344.1 132.1 345.9 134.9 346.5 135.9M370 85.3C370 86.8 369.9 91.3 370 94.5C370 97.8 370.2 101.2 370.3 104.5C370.3 107.8 370.4 111.4 370.3 114.5C370.1 117.6 369.8 120.7 369.3 123C368.8 125.4 367.7 126.6 367.1 128.7C366.6 130.9 366 134.7 365.7 135.9M340.8 112.4C341.6 111.9 343.8 110.6 345.8 109.5C347.8 108.4 350.5 107 352.9 105.9C355.3 104.9 357.4 104 360 103.1C362.6 102.1 365.7 101 368.6 100.2C371.4 99.5 374 99.3 377.1 98.8C380.2 98.3 383.1 97.8 387.1 97.4C391.1 97 397.3 96.9 401.1 96.7C404.9 96.5 407 96.3 409.9 96.3C412.8 96.3 415.5 96.7 418.4 96.7C421.4 96.6 426.2 96.1 427.7 96M312.3 98.8C313.1 99.3 315.7 100.5 317.3 101.7C318.8 102.9 319.9 104.5 321.5 105.9C323.2 107.4 325.1 108.9 327.2 110.2C329.4 111.5 333.2 113.2 334.4 113.8M312.3 118.8C313.4 118.8 316.7 119.2 318.7 119.1C320.7 118.9 322.5 118.5 324.4 118.1C326.3 117.7 328.2 116.6 330.1 116.6C332 116.6 334.8 117.8 335.8 118.1M321.5 105.9C321.2 107.4 320.1 111.6 319.4 114.5C318.7 117.3 317.9 120.7 317.3 123C316.7 125.4 316.2 126.6 315.8 128.7C315.5 130.9 315.3 134.7 315.1 135.9M405.6 85.3C405.9 86.6 407.3 91.2 407 93.1C406.8 95 404.4 94.8 404.2 96.7C404 98.6 404.9 102 405.6 104.5C406.3 107 407.8 109.6 408.5 111.6C409.2 113.7 409.4 114.5 409.9 116.6C410.4 118.8 410.8 121.3 411.3 124.5C411.8 127.7 412.5 134 412.7 135.9M395.6 85.3C396.1 86.1 397.6 88.4 398.5 90.3C399.4 92.2 400.6 95.6 401.1 96.7M427.7 105.2C426.6 105.6 423.3 106.3 421.3 107.4C419.3 108.4 417.5 110.1 415.6 111.6C413.7 113.2 410.8 115.8 409.9 116.6M409.9 116.6C408.9 116.4 406.3 115.3 404.2 115.2C402.1 115.1 399.2 115.2 397.1 115.9C394.9 116.6 393 118.1 391.4 119.5C389.7 120.9 388.8 122.7 387.1 124.5C385.4 126.3 383.3 128.3 381.4 130.2C379.5 132.1 376.6 134.9 375.7 135.9M412.7 85.3C413.2 86.4 414.6 89.8 415.6 91.7C416.5 93.6 417.8 94.5 418.4 96.7C419 98.8 419.2 101.6 419.2 104.5C419.2 107.5 418.4 111.2 418.4 114.5C418.4 117.8 418.9 120.9 419.2 124.5C419.4 128 419.7 134 419.9 135.9M409.9 116.6C410.8 117.5 413.9 120.3 415.6 121.6C417.3 122.9 417.8 123.9 419.9 124.5C421.9 125.1 426.4 125.1 427.7 125.2M336.5 120.2C337.8 120.4 341.6 121.1 344.3 121.6C347.1 122.1 350.3 122.2 352.9 123C355.5 123.9 357.6 125.7 360 126.6C362.4 127.6 366 128.4 367.1 128.7M426.3 98.8C427.4 98.9 430.9 99.1 432.7 99.5C434.5 100 435.8 100.6 437 101.7C438.2 102.7 439.1 103.9 439.8 105.9C440.5 108 441.2 111.2 441.2 113.8C441.2 116.4 440.4 119.1 439.8 121.6C439.2 124.1 438.2 126.4 437.7 128.7C437.2 131.1 437.1 134.7 437 135.9M444.1 85.3C443.9 86.4 443.4 89.7 442.7 91.7C442 93.7 440.8 95.7 439.8 97.4C438.9 99.1 437.4 101 437 101.7M426.3 124.5C427.4 124.7 430.7 125.2 432.7 125.9C434.7 126.6 436.5 127.6 438.4 128.7C440.3 129.9 442.6 131.8 444.1 133C445.6 134.2 447.1 135.4 447.7 135.9M500 131.9C500.7 131.1 503 128.8 504.7 127.3C506.3 125.8 508.1 124.5 509.6 123C511.2 121.6 512.6 120.2 513.9 118.8C515.2 117.3 516.5 115.9 517.5 114.5C518.4 113.1 519 111.5 519.6 110.2C520.2 108.9 520.7 107.8 521 106.7C521.4 105.5 520.8 103.8 521.8 103.1C522.7 102.4 524.7 102.6 526.7 102.4C528.8 102.1 531.4 102 533.9 101.7C536.4 101.3 540.4 100.5 541.7 100.2M521 106.7C521.8 108 524.1 111.8 525.3 114.5C526.5 117.2 527.6 120.7 528.2 123C528.8 125.4 528.9 126.6 528.9 128.7C528.9 130.9 528.3 134.7 528.2 135.9M541.7 121.6C540.9 122.6 538.3 124.9 536.7 127.3C535.2 129.7 533.2 134.4 532.4 135.9M500 131.9C499.2 132.3 496.6 133.8 495.4 134.4C494.2 135.1 493 135.6 492.5 135.9M198.3 136.4C199.6 136.3 203.2 135.7 206.1 135.7C209.1 135.7 212.5 136.4 216.1 136.4C219.7 136.4 224.2 135.7 227.5 135.7C230.8 135.7 233.2 135.8 236 136.4C238.9 137 242 138.7 244.6 139.3C247.2 139.9 249.1 139.9 251.7 140C254.3 140.1 257.2 139.9 260.3 140C263.4 140.1 267.2 140.5 270.2 140.7C273.3 140.9 275.9 141.2 278.8 141.4C281.6 141.6 284 141.5 287.3 142.1C290.7 142.7 295.4 144.3 298.7 145C302.1 145.7 304.8 146 307.3 146.4C309.8 146.8 312.6 147 313.7 147.1M252 134.3C251.9 135.2 251.7 138 251.4 140C251.2 142 250.8 144.1 250.6 146.4C250.3 148.7 250.1 151.1 250 153.5C250 155.9 250.4 158.6 250.3 160.6C250.2 162.7 250.1 164 249.6 165.6C249.1 167.3 248.2 168.8 247.4 170.6C246.7 172.4 245.8 173.9 245.3 176.3C244.8 178.7 244.7 183.4 244.6 184.9M236.8 134.3C236.5 135.4 236.2 138.7 235.3 140.7C234.5 142.7 233.1 144.6 231.8 146.4C230.5 148.2 228.9 149.7 227.5 151.4C226.1 153 224.4 154.7 223.2 156.4C222 158 221.2 159.7 220.4 161.4C219.5 163 218.7 164.6 218.2 166.3C217.8 168.1 217.4 170.1 217.5 172C217.6 173.9 218.5 175.6 218.9 177.7C219.4 179.9 220.1 183.7 220.4 184.9M198.3 166.3C199.4 166.2 202.4 166.3 204.7 165.6C207 164.9 209.2 162.8 211.8 162.1C214.4 161.4 217.8 161.2 220.4 161.4C223 161.5 224.9 162.4 227.5 162.8C230.1 163.1 233.7 163.5 236 163.5C238.4 163.5 240.8 162.9 241.7 162.8M256 161.4C257.4 161.5 261.7 162 264.5 162.1C267.3 162.2 270.4 162 272.8 162.1C275.2 162.2 276.4 162.2 278.8 162.8C281.2 163.4 284.5 164.8 287.3 165.6C290.2 166.5 293 167.2 295.9 167.8C298.7 168.4 301.5 168.8 304.4 169.2C307.4 169.6 312.2 169.8 313.7 169.9M241.7 162.8C241.6 163.6 240.6 166.2 241 167.8C241.5 169.3 242.8 171.2 244.6 172C246.4 172.9 249.8 173.2 251.7 172.8C253.6 172.3 255.2 170.7 256 169.2C256.8 167.7 256.9 165.2 256.7 163.5C256.5 161.8 255.9 160.2 254.6 159.2C253.3 158.3 250.7 157.8 248.9 157.8C247.1 157.8 245.1 158.4 243.9 159.2C242.7 160.1 242.1 162.2 241.7 162.8M244.6 172.3C246.5 172.4 252.4 172.6 256 172.8C259.6 173 262.6 173.2 266 173.5C269.3 173.7 272.9 173.7 275.9 174.2C279 174.7 281.2 175.7 284.5 176.3C287.8 176.9 292.6 177.6 295.9 177.7C299.2 177.9 301.5 177.4 304.4 177C307.4 176.7 312.2 175.8 313.7 175.6M290.2 134.3C289.5 135.6 287.3 139.6 285.9 142.1C284.5 144.6 282.8 146.9 281.6 149.2C280.5 151.6 279.4 154.1 278.8 156.4C278.2 158.6 278.4 160.4 278.1 162.8C277.7 165.2 276.9 168.1 276.7 170.6C276.4 173.1 276.5 175.4 276.7 177.7C276.8 180.1 277.3 183.7 277.4 184.9M198.3 145.7C199.4 144.9 203.4 142.4 204.7 140.7C206 139 205.9 136.5 206.1 135.7M312.3 145.7C314.3 145.8 321 146.3 324.4 146.4C327.8 146.5 330.1 146.1 332.9 146.1C335.8 146.1 338.9 146.2 341.8 146.4C344.6 146.6 347.2 146.8 350 147.1C352.8 147.5 356 148.2 358.6 148.5C361.2 148.9 362.9 148.9 365.7 149.2C368.6 149.6 372.6 150.7 375.7 150.7C378.8 150.7 381.6 149.8 384.2 149.2C386.9 148.7 388.9 147.5 391.8 147.1C394.6 146.8 398.3 147 401.3 147.1C404.4 147.2 407 147.6 409.9 147.8C412.7 148.1 415.5 148.4 418.4 148.5C421.4 148.7 426.2 148.5 427.7 148.5M332.9 146.1C333.2 147.6 333.9 152.1 334.4 154.9C334.8 157.8 335.8 160.6 335.8 163.5C335.8 166.3 334.8 168.5 334.4 172C333.9 175.6 333.2 182.7 332.9 184.9M350 134.3C350.3 135.4 350.8 138.7 351.5 140.7C352.2 142.7 353.1 144.5 354.3 146.4C355.5 148.3 357.3 150.4 358.6 152.1C359.9 153.8 361.6 155.7 362.2 156.4M343.6 134.3C344.2 135.6 345.7 139.9 347.2 142.1C348.7 144.4 351 146.8 352.9 147.8C354.8 148.9 357.6 148.4 358.6 148.5M362.2 156.4C361.1 156.6 358 157.2 355.7 157.8C353.5 158.4 351 159.1 348.6 159.9C346.2 160.8 343.9 162 341.5 162.8C339.1 163.6 336.7 164.2 334.4 164.9C332 165.6 330.1 166.3 327.2 167.1C324.4 167.8 319.8 169 317.3 169.6C314.8 170.2 313.1 170.5 312.3 170.6M360 153.5C360.3 152.8 360.3 150.2 361.4 149.2C362.6 148.3 364.8 147.6 367.1 147.8C369.5 148.1 373.8 149.5 375.7 150.7C377.6 151.9 378.3 153.3 378.5 154.9C378.8 156.6 378.1 159.2 377.1 160.6C376.2 162.1 375 163 372.8 163.5C370.7 164 366.3 164.1 364.3 163.5C362.3 162.9 361.4 161.6 360.7 159.9C360 158.3 360.1 154.6 360 153.5M370 163.5C370.2 164.4 370.7 167.3 371.4 169.2C372.1 171.1 373.6 173 374.3 174.9C375 176.8 375.3 178.9 375.7 180.6C376.1 182.3 376.3 184.2 376.4 184.9M361.4 163.5C361 164.4 358.8 167.1 358.6 169.2C358.4 171.3 359.3 173.7 360 176.3C360.7 178.9 362.4 183.4 362.9 184.9M377.1 160.6C378.3 160.9 382.1 161.1 384.2 162.1C386.4 163 388.8 164.7 389.9 166.3C391.1 168 390.7 170.1 391.4 172C392.1 173.9 393 175.6 394.2 177.7C395.4 179.9 397.8 183.7 398.5 184.9M409.9 134.3C409.7 135.6 408.9 139.9 408.5 142.1C408 144.4 407.2 145.7 407 147.8C406.9 150 408 152.3 407.8 154.9C407.5 157.6 406.5 160.6 405.6 163.5C404.8 166.3 403.7 169.2 402.8 172C401.8 174.9 400.6 178.5 399.9 180.6C399.2 182.7 398.7 184.2 398.5 184.9M375.7 150.7C376.6 149.5 380 145.4 381.4 143.5C382.8 141.6 382.8 140.8 384.2 139.3C385.7 137.7 389 135.1 389.9 134.3M378.5 154.9C380 154.7 384.2 154 387.1 153.5C389.9 153 393.3 153.2 395.6 152.1C398 151 400.4 147.9 401.3 147.1M418.4 134.3C418.7 135.6 419.9 139.7 419.9 142.1C419.9 144.5 418.6 146.2 418.4 148.5C418.3 150.9 418.7 153.4 419.2 156.4C419.6 159.3 420.2 163.3 421.3 166.3C422.4 169.4 424.5 173 425.6 174.9C426.6 176.8 427.3 177.3 427.7 177.7M341.5 184.9C342 183.7 342.9 179.9 344.3 177.7C345.8 175.6 348.1 173.7 350 172C351.9 170.4 353.8 169.2 355.7 167.8C357.6 166.3 360.5 164.2 361.4 163.5M445.5 134.3C446.7 134.9 450.2 136.9 452.6 137.8C455.1 138.8 457.6 139.4 460.5 140C463.3 140.6 466.5 141.2 469.7 141.4C473 141.6 476.6 141.5 479.7 141.4C482.8 141.3 485.9 141.2 488.3 140.7C490.6 140.2 492.5 139.6 494 138.6C495.4 137.5 496.3 135 496.8 134.3M426.3 147.8C427.4 148.1 430.4 148.7 432.7 149.2C435 149.8 437.2 150.8 439.8 151.4C442.4 152 445.5 152.5 448.4 152.8C451.2 153.2 454.2 153.3 456.9 153.5C459.7 153.8 461.9 154.2 464.8 154.2C467.6 154.2 470.8 153.8 474 153.5C477.2 153.3 480.7 153 484 152.8C487.3 152.6 490.6 152.5 494 152.1C497.3 151.7 500.9 151.1 503.9 150.7C507 150.2 509.1 149.8 512.5 149.2C515.9 148.7 520.9 147.8 524.2 147.1C527.5 146.4 529.5 145.8 532.4 145C535.4 144.1 540.2 142.6 541.7 142.1M437 134.3C437 135.8 436.9 140.6 437 143.5C437.1 146.5 437.3 149.8 437.7 152.1C438 154.4 438.6 155.1 439.1 157.5C439.6 159.9 439.9 163.5 440.5 166.3C441.1 169.2 442.1 171.8 442.7 174.9C443.3 178 443.9 183.2 444.1 184.9M460.5 140C460.1 141.1 458.9 144.1 458.3 146.4C457.8 148.7 457.2 151.1 456.9 153.5C456.7 155.9 456.4 158.3 456.9 160.6C457.4 163 458.6 165.4 459.8 167.8C461 170.1 462.9 172 464 174.9C465.2 177.7 466.4 183.2 466.9 184.9M464.8 155.9C466.1 156.1 470.1 156.3 472.6 157.1C475.1 157.9 477.3 159.3 479.7 160.6C482.1 162 484.7 163.8 486.8 165.2C489 166.6 490.4 168.1 492.5 169.2C494.7 170.3 497.3 171.3 499.7 172C502 172.8 504.4 173.4 506.8 173.5C509.2 173.6 511.8 172.6 513.9 172.8C516.1 172.9 518 173.4 519.6 174.2C521.3 175 523.1 176 523.9 177.7C524.7 179.5 524.5 183.7 524.6 184.9M488.3 140.7C489 141.6 491.1 144.5 492.5 146.4C494 148.3 495.2 150.2 496.8 152.1C498.5 154 500.4 155.9 502.5 157.8C504.7 159.7 507.5 161.6 509.6 163.5C511.8 165.4 513.7 167.4 515.3 169.2C517 171 518.9 173.4 519.6 174.2M488.3 140.7C487.8 141.9 486.1 145.8 485.4 147.8C484.7 149.8 484.2 152 484 152.8M529.6 134.3C529.5 135.4 529.4 138.6 528.9 140.7C528.4 142.8 526.9 144.7 526.7 147.1C526.6 149.5 527.8 152.2 528.2 154.9C528.5 157.7 529.1 160.9 528.9 163.5C528.6 166.1 527.3 168.2 526.7 170.6C526.1 173 525.7 175.4 525.3 177.7C525 180.1 524.7 183.7 524.6 184.9M541.7 160.6C540.2 161.4 535.4 163.5 532.4 164.9C529.5 166.3 526.3 168 523.9 169.2C521.5 170.4 519.1 171.6 518.2 172M503.9 150.7C504.7 151.9 507 155.7 508.2 157.8C509.4 159.9 511.3 161.1 511.1 163.5C510.8 165.9 508 169.7 506.8 172C505.6 174.4 504.7 175.6 503.9 177.7C503.2 179.9 502.8 183.7 502.5 184.9M503.9 177.7C504.7 177.2 506.6 175 508.2 174.2C509.9 173.4 513 173 513.9 172.8M198.3 188.3C199.4 188.5 202.2 189 204.7 189.7C207.2 190.4 210.4 192 213.2 192.5C216.1 193.1 218.7 193.4 221.8 193.3C224.9 193.1 228.2 192.2 231.8 191.8C235.4 191.5 240.8 190.8 243.5 191.1C246.1 191.5 245.4 193.4 247.4 194C249.5 194.6 253.1 194.7 256 194.7C258.8 194.7 261.7 194.3 264.5 194C267.4 193.6 269.8 192.9 273.1 192.5C276.4 192.2 280.7 192.1 284.5 191.8C288.3 191.6 292.6 191.5 295.9 191.1C299.2 190.8 301.5 190.2 304.4 189.7C307.4 189.2 312.2 188.5 313.7 188.3M244.6 183.3C244.5 184.5 243.9 187.9 243.9 190.4C243.8 192.9 244.4 195.8 244.3 198.2C244.2 200.7 243.8 203.2 243.2 205.4C242.5 207.5 241.3 209.4 240.3 211.1C239.4 212.7 238.4 213.7 237.5 215.3C236.5 217 235.6 219.4 234.6 221C233.7 222.7 232.6 223.4 231.8 225.3C230.9 227.2 230 231.3 229.6 232.4M239.3 210.8C240.7 210.8 244.7 210.9 247.4 211.1C250.2 211.2 253.1 211.9 256 211.8C258.8 211.7 261.7 210.7 264.5 210.4C267.3 210 270 209.8 272.8 209.6C275.7 209.5 278.7 209.6 281.6 209.4C284.5 209.1 287.3 209.1 290.2 208.2C293 207.3 295.9 204.9 298.7 203.9C301.6 203 304.8 202.8 307.3 202.5C309.8 202.3 312.6 202.5 313.7 202.5M278.8 183.3C278.4 184.4 277.4 187.4 276.7 189.7C275.9 192 275.1 194.7 274.5 196.8C273.9 199 273.4 200.4 273.1 202.5C272.8 204.7 273 207.3 272.8 209.6C272.6 212 272.1 214.3 271.7 216.8C271.2 219.3 270.6 222 270.2 224.6C269.9 227.2 269.7 231.1 269.5 232.4M287.3 183.3C287.8 184.4 289.5 187.4 290.2 189.7C290.9 192 291.6 194.4 291.6 196.8C291.6 199.2 290.9 201.8 290.2 203.9C289.5 206.1 288.1 207.5 287.3 209.6C286.6 211.8 286.4 214.3 285.9 216.8C285.4 219.3 284.7 222 284.5 224.6C284.3 227.2 284.5 231.1 284.5 232.4M217.5 183.3C218 184.4 219.7 188 220.4 189.7C221.1 191.4 221.8 191.8 221.8 193.3C221.8 194.7 221.1 196.5 220.4 198.2C219.7 200 218 203 217.5 203.9M198.3 208.9C199.6 209.2 203.6 210.2 206.1 210.4C208.6 210.5 210.9 209.5 213.2 209.6C215.6 209.8 218 210.6 220.4 211.1C222.7 211.5 224.9 212 227.5 212.5C230.1 213 234.1 214.2 236 213.9C238 213.6 238.8 211.3 239.3 210.8M298.7 183.3C298.9 184.6 299.7 188.6 299.5 191.1C299.2 193.6 297.4 196.1 297.3 198.2C297.2 200.4 298.5 203 298.7 203.9M331.5 187.6C332.8 187.7 336.5 188 339.4 188.3C342.2 188.5 345.4 188.7 348.6 189C351.8 189.2 355.2 189.7 358.6 189.7C362 189.7 365.5 189.1 368.9 189C372.2 188.9 375.5 189.1 378.5 189C381.6 188.9 384.2 188.3 387.1 188.3C389.9 188.3 392.8 189.1 395.6 189C398.5 188.9 401.3 188 404.2 187.6C407 187.1 409.9 186.5 412.7 186.1C415.6 185.8 418.8 185.7 421.3 185.4C423.8 185.2 426.6 184.8 427.7 184.7M368.9 183.3C368.9 184.8 369.3 189.6 369.3 192.5C369.2 195.5 368.8 198.2 368.6 201.1C368.3 204 368 207.1 367.9 209.9C367.7 212.8 367.6 215.8 367.4 218.2C367.3 220.6 367.2 222.2 367.1 224.6C367.1 227 367.1 231.1 367.1 232.4M312.3 205.4C313.8 205.5 318.6 206 321.5 206.1C324.5 206.2 327.2 206.2 330.1 206.1C332.9 206 335.6 205.5 338.6 205.4C341.7 205.3 345.3 205.3 348.6 205.4C351.9 205.5 355.4 205.8 358.6 206.1C361.8 206.3 364.8 206.7 367.9 206.8C370.9 206.9 373.9 206.8 377.1 206.8C380.3 206.8 384 206.7 387.1 206.8C390.2 206.9 393.3 207 395.6 207.5C398 208 399.4 208.7 401.3 209.6C403.2 210.6 405.1 211.8 407 213.2C408.9 214.6 410.8 216.7 412.7 218.2C414.6 219.7 417 221.4 418.4 222.5C419.9 223.5 420.1 222.9 421.3 224.6C422.5 226.3 424.9 231.1 425.6 232.4M338.6 188.3C338.6 189.7 338.4 194 338.4 196.8C338.4 199.7 338.5 202.5 338.6 205.4C338.8 208.2 339.1 210.7 339.4 213.9C339.6 217.1 340 221.5 340.1 224.6C340.2 227.7 340.1 231.1 340.1 232.4M380 188.3C380.7 189.2 382.6 192.1 384.2 194C385.9 195.9 387.8 198 389.9 199.7C392.1 201.3 395.2 202.3 397.1 203.9C399 205.6 400.6 208.7 401.3 209.6M398.5 183.3C399 184.6 400.4 188.6 401.3 191.1C402.3 193.6 404 195.9 404.2 198.2C404.4 200.6 403.2 203.5 402.8 205.4C402.3 207.3 401.1 207.7 401.3 209.6C401.6 211.5 403.5 214.3 404.2 216.8C404.9 219.3 405.3 222 405.6 224.6C406 227.2 406.2 231.1 406.3 232.4M335.8 206.1C334.8 207.2 331.8 210.2 330.1 212.5C328.4 214.8 327 217.6 325.8 219.6C324.6 221.6 323.9 222.5 323 224.6C322 226.7 320.6 231.1 320.1 232.4M338.6 218.2C340.3 218.3 345.3 218.9 348.6 218.9C351.9 218.9 355.5 218.3 358.6 218.2C361.7 218.1 366 218.2 367.4 218.2M426.3 190.4C427.8 190.8 431.9 191.9 435.5 192.5C439.2 193.2 444.1 194 447.9 194.3C451.7 194.5 454.7 194.1 458.3 194C462 193.8 466 193.5 469.7 193.3C473.5 193.1 477.3 192.8 480.9 192.8C484.4 192.9 487.7 193.5 491.1 193.7C494.5 193.9 498.2 194.2 501.1 194C503.9 193.8 506.3 193.3 508.2 192.5C510.1 191.8 511.8 190.2 512.5 189.7M444.1 183.3C444.2 184.4 444.6 187.8 444.8 189.7C445 191.6 445.6 192.5 445.5 194.7C445.4 196.8 444.7 199.8 444.1 202.5C443.5 205.3 442.6 208.2 442 211.1C441.4 213.9 440.9 217.4 440.5 219.6C440.2 221.9 440.1 222.5 439.8 224.6C439.6 226.7 439.2 231.1 439.1 232.4M468.3 183.3C468.4 184.4 468.8 188 469 189.7C469.3 191.4 469.5 191.4 469.7 193.3C470 195.2 470.2 198.4 470.5 201.1C470.7 203.8 470.9 206.8 471.2 209.6C471.4 212.5 471.6 215.7 471.9 218.2C472.1 220.7 472.5 222.2 472.6 224.6C472.7 227 472.6 231.1 472.6 232.4M506.8 183.3C506.6 184.4 505.8 187.7 505.4 189.7C504.9 191.7 504.7 193.5 503.9 195.4C503.2 197.3 501.9 199.6 501.1 201.1C500.3 202.6 500.2 203.2 499.2 204.7C498.3 206.1 496.7 208.1 495.4 209.6C494 211.2 492.5 212.5 491.1 213.9C489.7 215.3 488.2 216.8 486.8 218.2C485.5 219.6 484.1 221.4 483.3 222.5C482.5 223.5 482.1 224.3 481.9 224.6M501.8 183.3C502 184.4 502.9 187.7 503.2 189.7C503.6 191.7 503.8 194.4 503.9 195.4M512.5 189.7C513.2 189.5 515.2 187.8 516.8 188.3C518.4 188.7 521.3 191.8 522.2 192.5"/>
</g>
<rect x="269" y="102.3" width="10.1" height="5" rx="0.5" fill="#fff" opacity=".9"/><rect x="269.3" y="103.6" width="9.6" height="3.4" fill="#2fbb9b"/><rect x="269.3" y="102.6" width="9.6" height="1.05" fill="#e3403f"/><rect x="271.2" y="104.6" width="5.8" height="1.5" fill="#d6f3ec" opacity=".8"/>
<rect x="291.1" y="126.2" width="10.1" height="5" rx="0.5" fill="#fff" opacity=".9"/><rect x="291.4" y="127.5" width="9.6" height="3.4" fill="#2fbb9b"/><rect x="291.4" y="126.5" width="9.6" height="1.05" fill="#e3403f"/><rect x="293.3" y="128.5" width="5.8" height="1.5" fill="#d6f3ec" opacity=".8"/>
<rect x="363.5" y="97.7" width="10.1" height="5" rx="0.5" fill="#fff" opacity=".9"/><rect x="363.8" y="99" width="9.6" height="3.4" fill="#2fbb9b"/><rect x="363.8" y="98" width="9.6" height="1.05" fill="#f0b43c"/><rect x="365.7" y="100" width="5.8" height="1.5" fill="#d6f3ec" opacity=".8"/>
<rect x="396" y="94.2" width="10.1" height="5" rx="0.5" fill="#fff" opacity=".9"/><rect x="396.3" y="95.5" width="9.6" height="3.4" fill="#2fbb9b"/><rect x="396.3" y="94.4" width="9.6" height="1.05" fill="#f0b43c"/><rect x="398.2" y="96.4" width="5.8" height="1.5" fill="#d6f3ec" opacity=".8"/>
<rect x="363.5" y="117" width="10.1" height="5" rx="0.5" fill="#fff" opacity=".9"/><rect x="363.8" y="118.3" width="9.6" height="3.4" fill="#2fbb9b"/><rect x="363.8" y="117.2" width="9.6" height="1.05" fill="#e3403f"/><rect x="365.7" y="119.2" width="5.8" height="1.5" fill="#d6f3ec" opacity=".8"/>
<rect x="516" y="104.2" width="10.1" height="5" rx="0.5" fill="#fff" opacity=".9"/><rect x="516.2" y="105.5" width="9.6" height="3.4" fill="#2fbb9b"/><rect x="516.2" y="104.4" width="9.6" height="1.05" fill="#e3403f"/><rect x="518.1" y="106.4" width="5.8" height="1.5" fill="#d6f3ec" opacity=".8"/>
<rect x="494.9" y="129.4" width="10.1" height="5" rx="0.5" fill="#fff" opacity=".9"/><rect x="495.2" y="130.7" width="9.6" height="3.4" fill="#2fbb9b"/><rect x="495.2" y="129.6" width="9.6" height="1.05" fill="#e3403f"/><rect x="497.1" y="131.6" width="5.8" height="1.5" fill="#d6f3ec" opacity=".8"/>
<rect x="534.5" y="116" width="10.1" height="5" rx="0.5" fill="#fff" opacity=".9"/><rect x="534.8" y="117.3" width="9.6" height="3.4" fill="#2fbb9b"/><rect x="534.8" y="116.2" width="9.6" height="1.05" fill="#e3403f"/><rect x="536.7" y="118.2" width="5.8" height="1.5" fill="#d6f3ec" opacity=".8"/>
<rect x="267.8" y="159" width="10.1" height="5" rx="0.5" fill="#fff" opacity=".9"/><rect x="268" y="160.3" width="9.6" height="3.4" fill="#2fbb9b"/><rect x="268" y="159.3" width="9.6" height="1.05" fill="#e3403f"/><rect x="269.9" y="161.3" width="5.8" height="1.5" fill="#d6f3ec" opacity=".8"/>
<rect x="363.9" y="134.6" width="13.6" height="5" rx="0.5" fill="#fff" opacity=".9"/><rect x="364.2" y="135.9" width="13.1" height="3.4" fill="#2fbb9b"/><rect x="364.2" y="134.9" width="13.1" height="1.05" fill="#e3403f"/><rect x="366.1" y="136.9" width="9.3" height="1.5" fill="#d6f3ec" opacity=".8"/>
<rect x="319.3" y="142.8" width="10.1" height="5" rx="0.5" fill="#fff" opacity=".9"/><rect x="319.6" y="144.1" width="9.6" height="3.4" fill="#2fbb9b"/><rect x="319.6" y="143" width="9.6" height="1.05" fill="#f0b43c"/><rect x="321.5" y="145" width="5.8" height="1.5" fill="#d6f3ec" opacity=".8"/>
<rect x="336.7" y="142.8" width="10.1" height="5" rx="0.5" fill="#fff" opacity=".9"/><rect x="337" y="144.1" width="9.6" height="3.4" fill="#2fbb9b"/><rect x="337" y="143" width="9.6" height="1.05" fill="#e3403f"/><rect x="338.9" y="145" width="5.8" height="1.5" fill="#d6f3ec" opacity=".8"/>
<rect x="386.7" y="143.6" width="10.1" height="5" rx="0.5" fill="#fff" opacity=".9"/><rect x="387" y="144.9" width="9.6" height="3.4" fill="#2fbb9b"/><rect x="387" y="143.9" width="9.6" height="1.05" fill="#e3403f"/><rect x="388.9" y="145.9" width="5.8" height="1.5" fill="#d6f3ec" opacity=".8"/>
<rect x="434.1" y="155" width="10.1" height="5" rx="0.5" fill="#fff" opacity=".9"/><rect x="434.3" y="156.3" width="9.6" height="3.4" fill="#2fbb9b"/><rect x="434.3" y="155.3" width="9.6" height="1.05" fill="#e3403f"/><rect x="436.2" y="157.3" width="5.8" height="1.5" fill="#d6f3ec" opacity=".8"/>
<rect x="481.8" y="162.7" width="10.1" height="5" rx="0.5" fill="#fff" opacity=".9"/><rect x="482" y="164" width="9.6" height="3.4" fill="#2fbb9b"/><rect x="482" y="163" width="9.6" height="1.05" fill="#e3403f"/><rect x="483.9" y="165" width="5.8" height="1.5" fill="#d6f3ec" opacity=".8"/>
<rect x="519.1" y="143.9" width="10.1" height="5" rx="0.5" fill="#fff" opacity=".9"/><rect x="519.4" y="145.2" width="9.6" height="3.4" fill="#2fbb9b"/><rect x="519.4" y="144.1" width="9.6" height="1.05" fill="#e3403f"/><rect x="521.3" y="146.1" width="5.8" height="1.5" fill="#d6f3ec" opacity=".8"/>
<rect x="332.4" y="184.1" width="14" height="5" rx="0.5" fill="#fff" opacity=".9"/><rect x="332.6" y="185.4" width="13.5" height="3.4" fill="#2fbb9b"/><rect x="332.6" y="184.3" width="13.5" height="1.05" fill="#e3403f"/><rect x="334.5" y="186.3" width="9.7" height="1.5" fill="#d6f3ec" opacity=".8"/>
<rect x="362.4" y="207.4" width="10.1" height="5" rx="0.5" fill="#fff" opacity=".9"/><rect x="362.6" y="208.7" width="9.6" height="3.4" fill="#2fbb9b"/><rect x="362.6" y="207.7" width="9.6" height="1.05" fill="#e3403f"/><rect x="364.5" y="209.7" width="5.8" height="1.5" fill="#d6f3ec" opacity=".8"/>
<rect x="405.1" y="213.1" width="10.1" height="5" rx="0.5" fill="#fff" opacity=".9"/><rect x="405.4" y="214.4" width="9.6" height="3.4" fill="#2fbb9b"/><rect x="405.4" y="213.4" width="9.6" height="1.05" fill="#e3403f"/><rect x="407.3" y="215.4" width="5.8" height="1.5" fill="#d6f3ec" opacity=".8"/>
<rect x="442.9" y="192.2" width="10.1" height="5" rx="0.5" fill="#fff" opacity=".9"/><rect x="443.1" y="193.5" width="9.6" height="3.4" fill="#2fbb9b"/><rect x="443.1" y="192.4" width="9.6" height="1.05" fill="#e3403f"/><rect x="445" y="194.4" width="5.8" height="1.5" fill="#d6f3ec" opacity=".8"/>
<rect x="475.8" y="190" width="10.1" height="5" rx="0.5" fill="#fff" opacity=".9"/><rect x="476.1" y="191.3" width="9.6" height="3.4" fill="#2fbb9b"/><rect x="476.1" y="190.3" width="9.6" height="1.05" fill="#e3403f"/><rect x="478" y="192.3" width="5.8" height="1.5" fill="#d6f3ec" opacity=".8"/>
<rect x="494.2" y="202.2" width="10.1" height="5" rx="0.5" fill="#fff" opacity=".9"/><rect x="494.4" y="203.5" width="9.6" height="3.4" fill="#2fbb9b"/><rect x="494.4" y="202.4" width="9.6" height="1.05" fill="#e3403f"/><rect x="496.3" y="204.4" width="5.8" height="1.5" fill="#d6f3ec" opacity=".8"/>
<rect x="446.5" y="223.2" width="13.8" height="5" rx="0.5" fill="#fff" opacity=".9"/><rect x="446.7" y="224.5" width="13.3" height="3.4" fill="#2fbb9b"/><rect x="446.7" y="223.5" width="13.3" height="1.05" fill="#e3403f"/><rect x="448.6" y="225.5" width="9.5" height="1.5" fill="#d6f3ec" opacity=".8"/>
<rect x="269.8" y="182.1" width="10.1" height="5" rx="0.5" fill="#fff" opacity=".9"/><rect x="270.1" y="183.4" width="9.6" height="3.4" fill="#2fbb9b"/><rect x="270.1" y="182.3" width="9.6" height="1.05" fill="#e3403f"/><rect x="272" y="184.3" width="5.8" height="1.5" fill="#d6f3ec" opacity=".8"/>
<circle cx="205.4" cy="88.6" r="1.35" fill="#f7b9b4"/><circle cx="205.4" cy="88.6" r="0.85" fill="#e5484a"/>
<circle cx="303" cy="95.7" r="1.35" fill="#f7b9b4"/><circle cx="303" cy="95.7" r="0.85" fill="#e5484a"/>
<text x="302" y="92.9" class="cl">衡水</text>
<circle cx="334.8" cy="113.4" r="1.35" fill="#f7b9b4"/><circle cx="334.8" cy="113.4" r="0.85" fill="#e5484a"/>
<text x="335.1" y="110.6" class="cl">德州</text>
<circle cx="248.7" cy="134.4" r="1.35" fill="#f7b9b4"/><circle cx="248.7" cy="134.4" r="0.85" fill="#e5484a"/>
<text x="249" y="131.6" class="cl">邢台</text>
<circle cx="250" cy="160.6" r="1.35" fill="#f7b9b4"/><circle cx="250" cy="160.6" r="0.85" fill="#e5484a"/>
<text x="250.6" y="157.8" class="cl">邯郸</text>
<circle cx="409.9" cy="116.6" r="1.35" fill="#f7b9b4"/><circle cx="409.9" cy="116.6" r="0.85" fill="#e5484a"/>
<text x="410.3" y="113.8" class="cl">滨州</text>
<circle cx="413.7" cy="149.2" r="1.35" fill="#f7b9b4"/><circle cx="413.7" cy="149.2" r="0.85" fill="#e5484a"/>
<text x="414.1" y="146.6" class="cl">淄博</text>
<circle cx="442.7" cy="113.8" r="1.35" fill="#f7b9b4"/><circle cx="442.7" cy="113.8" r="0.85" fill="#e5484a"/>
<text x="442.7" y="111" class="cl">东营</text>
<circle cx="464.8" cy="155.9" r="1.35" fill="#f7b9b4"/><circle cx="464.8" cy="155.9" r="0.85" fill="#e5484a"/>
<text x="465.4" y="153" class="cl">潍坊</text>
<circle cx="243.5" cy="190.4" r="1.35" fill="#f7b9b4"/><circle cx="243.5" cy="190.4" r="0.85" fill="#e5484a"/>
<text x="243.2" y="187.6" class="cl">安阳</text>
<circle cx="239.3" cy="210.8" r="1.35" fill="#f7b9b4"/><circle cx="239.3" cy="210.8" r="0.85" fill="#e5484a"/>
<text x="238.2" y="207.8" class="cl">鹤壁</text>
<circle cx="272.8" cy="209.6" r="1.35" fill="#f7b9b4"/><circle cx="272.8" cy="209.6" r="0.85" fill="#e5484a"/>
<text x="273.1" y="206.8" class="cl">濮阳</text>
<circle cx="317.3" cy="169.6" r="1.35" fill="#f7b9b4"/><circle cx="317.3" cy="169.6" r="0.85" fill="#e5484a"/>
<text x="318" y="166.8" class="cl">聊城</text>
<circle cx="368.9" cy="184.7" r="1.35" fill="#f7b9b4"/><circle cx="368.9" cy="184.7" r="0.85" fill="#e5484a"/>
<text x="369.3" y="182.1" class="cl">泰安</text>
<circle cx="522.2" cy="192.5" r="1.35" fill="#f7b9b4"/><circle cx="522.2" cy="192.5" r="0.85" fill="#e5484a"/>
<text x="522.8" y="189.6" class="cl">青岛</text>
<text x="370.8" y="166.3" class="cl cb">济南</text>
</svg>
<div class="a" style="left:505px;top:91.1px;width:31.2px;height:8.9px;box-shadow:.4px .6px 1.2px rgba(0,0,0,.35);border-radius:.9px;overflow:hidden"><div class="a" style="left:0;top:0;width:15.6px;height:8.9px;background:#8ea8e0;color:#fff;font-weight:bold;text-align:center;line-height:9.1px;font-size:5.2px">地图</div><div class="a" style="left:15.6px;top:0;width:15.4px;height:8.9px;background:#fff;color:#111;font-weight:bold;text-align:center;line-height:9.1px;font-size:5.2px">混合</div></div>
<div class="a" style="left:201.2px;top:216px;width:30.6px;height:7px;background:rgba(255,255,255,.95);border-radius:.8px"></div>
<div class="a" style="left:201.9px;top:214.9px;height:9px;line-height:9px;font-size:7.2px;font-weight:bold;color:#e10602;letter-spacing:-.2px">Bai</div>
<svg style="left:211.7px;top:211.7px" width="9.4" height="10.8" viewBox="0 0 96 112"><g fill="#fff" stroke="#fff" stroke-width="10"><ellipse cx="18" cy="48" rx="10" ry="14"/><ellipse cx="36" cy="22" rx="10" ry="14"/><ellipse cx="62" cy="22" rx="10" ry="14"/><ellipse cx="80" cy="48" rx="10" ry="14"/><path d="M48 44c14 0 20 14 30 24s12 22 4 30-22 4-34 4-26 4-34-4-6-20 4-30 16-24 30-24z"/></g><g fill="#2932e1"><ellipse cx="18" cy="48" rx="10" ry="14"/><ellipse cx="36" cy="22" rx="10" ry="14"/><ellipse cx="62" cy="22" rx="10" ry="14"/><ellipse cx="80" cy="48" rx="10" ry="14"/><path d="M48 44c14 0 20 14 30 24s12 22 4 30-22 4-34 4-26 4-34-4-6-20 4-30 16-24 30-24z"/></g><path fill="#fff" d="M30 70h22v22H30zM38 76v10h8V76z" fill-rule="evenodd"/></svg>
<div class="a" style="left:221.3px;top:216.6px;height:8.4px;line-height:8.4px;font-size:5.2px;font-weight:bold;color:#e10602;letter-spacing:-.1px">百度</div>
<div class="a" style="left:200.6px;top:224.6px;height:6.8px;line-height:8.4px;font-size:5.36px;color:#000;background:rgba(255,255,255,.72);padding:0 1px;letter-spacing:.02px">© 2023 Baidu - GS(2021)6026号 - 甲测资字11111342 - 京ICP证030173号 - Data © 百度智图 &amp; <span style="color:#6a6fd0">OpenStreetMap</span> &amp; <span style="color:#6a6fd0">HERE</span></div>
<svg style="left:365.3px;top:141.6px" width="10.8" height="20.4" viewBox="0 0 108 204"><path fill="#17988a" d="M54 6c25 0 44 19 44 44 0 16-10 30-22 44L54 120 32 94C20 80 10 66 10 50 10 25 29 6 54 6z"/><circle cx="54" cy="50" r="28" fill="#7ccfc4"/><path fill="#17988a" d="M54 28l17 13v24H37V41z"/><path fill="#fff" d="M48 48h12v17H48z" opacity=".7"/><path fill="#323232" d="M54 74c25 0 45 20 45 45 0 17-10 32-23 47L54 198 32 166C19 151 9 136 9 119c0-25 20-45 45-45z"/><circle cx="54" cy="119" r="29" fill="#8f8f8f"/><path fill="#323232" d="M54 97l17 13v24H37v-24z"/><circle cx="54" cy="118" r="7.5" fill="#c4c4c4"/></svg>
<div class="a pn" style="left:547.5px;top:72.8px;width:247px;height:162.3px">
<div class="a ph"></div><div class="a pt" style="left:4.7px">设备信息</div>
<div class="a bt" style="left:220.1px"><svg style="left:2.5px;top:2.8px" width="6.8" height="6.2" viewBox="0 0 68 62"><circle cx="20" cy="31" r="13" fill="none" stroke="#1c1c1c" stroke-width="10"/><circle cx="20" cy="31" r="19" fill="none" stroke="#1c1c1c" stroke-width="5" stroke-dasharray="6 5"/><g fill="#1c1c1c"><circle cx="52" cy="13" r="10"/><circle cx="52" cy="49" r="10"/></g><g fill="#fff"><circle cx="52" cy="13" r="3.5"/><circle cx="52" cy="49" r="3.5"/></g></svg></div>
<div class="a bt" style="left:231.7px"><svg style="left:1.5px;top:2.6px" width="7.8" height="5" viewBox="0 0 78 50"><rect x="0" y="0" width="70" height="50" fill="#8d8983"/><path stroke="#5d5a56" stroke-width="6" d="M0 3h70M0 47h70M3 0v50"/><path fill="#c9cdd2" d="M14 14h8v10h-8zM30 22h8v12h-8zM44 12h8v10h-8zM46 32h7v8h-7z"/><path fill="#a9cdf5" d="M66 4h10v42H66z"/></svg></div>
<div class="a k" style="top:18.4px">设备名称:</div><div class="a v" style="left:37px;top:18.4px">地埋式积水监测系统</div>
<div class="a k" style="top:32.05px">设备地址:</div><div class="a v" style="left:37px;top:32.05px"><span style="font-size:6.6px;letter-spacing:-.2px">99999995</span></div>
<div class="a k" style="top:45.7px">所属区域:</div><div class="a v" style="left:37px;top:45.7px">地埋式积水监测系统</div>
<div class="a k" style="top:59.35px">报警数据:</div><div class="a v" style="left:37px;top:59.35px">开</div>
<div class="a k" style="top:73px">报警类型:</div><div class="a v" style="left:37px;top:73px">离线报警，超限报警，复归通知</div>
<div class="a k" style="top:86.65px">标记位置:</div><div class="a v" style="left:37px;top:86.65px">关闭</div>
<div class="a k" style="top:100.3px">离线判断间隔:</div><div class="a v" style="left:49.4px;top:100.3px"><span style="font-size:6.2px">1</span>分钟</div>
<div class="a k" style="top:113.95px">保存数据间隔:</div><div class="a v" style="left:49.4px;top:113.95px"><span style="font-size:6.2px">5</span>分钟</div>
<div class="a" style="left:9.1px;top:128.1px;height:10px;line-height:10px;color:#333">摄像头信息</div>
<div class="a" style="left:4.6px;top:138.3px;width:238px;height:.5px;background:#e4e4e4"></div>
<div class="a" style="left:7.2px;top:142.8px;width:41.4px;height:11.6px;box-shadow:0 0 0 .45px #d9d9d9;border-radius:.8px;background:#fff"><svg style="left:3.6px;top:3.3px" width="6.8" height="4.8" viewBox="0 0 68 48"><rect x="3" y="3" width="48" height="42" rx="8" fill="none" stroke="#888" stroke-width="5"/><path fill="none" stroke="#888" stroke-width="5" d="M51 18l14-8v28l-14-8"/><path fill="#888" d="M20 14l16 10-16 10z"/></svg><div class="a" style="left:12px;top:.8px;height:11px;line-height:11.2px;font-size:6.9px;letter-spacing:-.05px;color:#222">https<span>:</span>/...</div></div>
</div>
<div class="a pn" style="left:90px;top:239px;width:704.2px;height:170px">
<div class="a ph" style="height:15.6px"></div><div class="a pt" style="left:5px;top:3.2px">因子信息</div>
<div class="a bt" style="left:676.6px;top:4px;width:9.6px;height:9.8px"><svg style="left:2.2px;top:2.6px" width="5" height="4.6" viewBox="0 0 50 46"><path fill="#222" d="M0 0h50v12H0zM0 17h50v12H0zM0 34h50v12H0z"/></svg></div>
<div class="a bt" style="left:689.3px;top:4px;width:9.8px;height:9.8px"><svg style="left:1.5px;top:1.3px" width="6.6" height="6.8" viewBox="0 0 66 68"><rect x="3" y="12" width="60" height="53" fill="#fbfbfd" stroke="#c9c9d6" stroke-width="3.5"/><path fill="#2b2b33" d="M6 3h13v13H6zM26 3h13v13H26zM46 3h13v13H46z"/><path fill="#b9bcc6" d="M30 36h26v20H30z"/><path fill="#8d93a8" d="M10 26l8 18 10-8v8H10z"/></svg></div>
<div class="a fc" style="left:3px"><div class="a g"><svg style="left:4.6px;top:10.4px" width="13" height="13.4" viewBox="0 0 130 134"><g fill="none" stroke="#fff" stroke-width="11" stroke-linecap="round"><path d="M18 52a48 48 0 0 1 94 0"/><path d="M40 56a26 26 0 0 1 50 0"/><path d="M65 46v30" stroke-width="8"/></g><rect x="0" y="74" width="130" height="58" rx="9" fill="#fff"/><path fill="#44a86b" d="M18 94h10v14H18zM36 94h10v14H36zM52 94h6v14h-6z"/></svg></div><div class="a fl">水位值<span style="font-size:6.5px">-1(m)</span></div><div class="a fv">0.24</div><svg style="left:103.3px;top:2.6px" width="6.5" height="6.1" viewBox="0 0 64 60"><circle cx="24" cy="24" r="17" fill="none" stroke="#222" stroke-width="9.5"/><path stroke="#222" stroke-width="11" stroke-linecap="round" d="M38 37l18 16"/></svg></div>
<div class="a fc" style="left:119px"><div class="a g"><svg style="left:4.6px;top:10.4px" width="13" height="13.4" viewBox="0 0 130 134"><g fill="none" stroke="#fff" stroke-width="11" stroke-linecap="round"><path d="M18 52a48 48 0 0 1 94 0"/><path d="M40 56a26 26 0 0 1 50 0"/><path d="M65 46v30" stroke-width="8"/></g><rect x="0" y="74" width="130" height="58" rx="9" fill="#fff"/><path fill="#44a86b" d="M18 94h10v14H18zM36 94h10v14H36zM52 94h6v14h-6z"/></svg></div><div class="a fl">电池电量<span style="font-size:6.5px">-1(%)</span></div><div class="a fv">98</div><svg style="left:103.3px;top:2.6px" width="6.5" height="6.1" viewBox="0 0 64 60"><circle cx="24" cy="24" r="17" fill="none" stroke="#222" stroke-width="9.5"/><path stroke="#222" stroke-width="11" stroke-linecap="round" d="M38 37l18 16"/></svg></div>
<div class="a fc" style="left:235px"><div class="a g"><svg style="left:4.6px;top:10.4px" width="13" height="13.4" viewBox="0 0 130 134"><g fill="none" stroke="#fff" stroke-width="11" stroke-linecap="round"><path d="M18 52a48 48 0 0 1 94 0"/><path d="M40 56a26 26 0 0 1 50 0"/><path d="M65 46v30" stroke-width="8"/></g><rect x="0" y="74" width="130" height="58" rx="9" fill="#fff"/><path fill="#44a86b" d="M18 94h10v14H18zM36 94h10v14H36zM52 94h6v14h-6z"/></svg></div><div class="a fl">水位值<span style="font-size:6.5px">-2(m)</span></div><div class="a fv">0.26</div><svg style="left:103.3px;top:2.6px" width="6.5" height="6.1" viewBox="0 0 64 60"><circle cx="24" cy="24" r="17" fill="none" stroke="#222" stroke-width="9.5"/><path stroke="#222" stroke-width="11" stroke-linecap="round" d="M38 37l18 16"/></svg></div>
<div class="a fc" style="left:351px"><div class="a g"><svg style="left:4.6px;top:10.4px" width="13" height="13.4" viewBox="0 0 130 134"><g fill="none" stroke="#fff" stroke-width="11" stroke-linecap="round"><path d="M18 52a48 48 0 0 1 94 0"/><path d="M40 56a26 26 0 0 1 50 0"/><path d="M65 46v30" stroke-width="8"/></g><rect x="0" y="74" width="130" height="58" rx="9" fill="#fff"/><path fill="#44a86b" d="M18 94h10v14H18zM36 94h10v14H36zM52 94h6v14h-6z"/></svg></div><div class="a fl">电池电量<span style="font-size:6.5px">-2(%)</span></div><div class="a fv">95</div><svg style="left:103.3px;top:2.6px" width="6.5" height="6.1" viewBox="0 0 64 60"><circle cx="24" cy="24" r="17" fill="none" stroke="#222" stroke-width="9.5"/><path stroke="#222" stroke-width="11" stroke-linecap="round" d="M38 37l18 16"/></svg></div>
<div class="a fc" style="left:467px"><div class="a g"><svg style="left:4.6px;top:10.4px" width="13" height="13.4" viewBox="0 0 130 134"><g fill="none" stroke="#fff" stroke-width="11" stroke-linecap="round"><path d="M18 52a48 48 0 0 1 94 0"/><path d="M40 56a26 26 0 0 1 50 0"/><path d="M65 46v30" stroke-width="8"/></g><rect x="0" y="74" width="130" height="58" rx="9" fill="#fff"/><path fill="#44a86b" d="M18 94h10v14H18zM36 94h10v14H36zM52 94h6v14h-6z"/></svg></div><div class="a fl">水位值<span style="font-size:6.5px">-3(m)</span></div><div class="a fv">0.22</div><svg style="left:103.3px;top:2.6px" width="6.5" height="6.1" viewBox="0 0 64 60"><circle cx="24" cy="24" r="17" fill="none" stroke="#222" stroke-width="9.5"/><path stroke="#222" stroke-width="11" stroke-linecap="round" d="M38 37l18 16"/></svg></div>
<div class="a fc" style="left:583px"><div class="a g"><svg style="left:4.6px;top:10.4px" width="13" height="13.4" viewBox="0 0 130 134"><g fill="none" stroke="#fff" stroke-width="11" stroke-linecap="round"><path d="M18 52a48 48 0 0 1 94 0"/><path d="M40 56a26 26 0 0 1 50 0"/><path d="M65 46v30" stroke-width="8"/></g><rect x="0" y="74" width="130" height="58" rx="9" fill="#fff"/><path fill="#44a86b" d="M18 94h10v14H18zM36 94h10v14H36zM52 94h6v14h-6z"/></svg></div><div class="a fl">电池电量<span style="font-size:6.5px">-3(%)</span></div><div class="a fv">100</div><svg style="left:103.3px;top:2.6px" width="6.5" height="6.1" viewBox="0 0 64 60"><circle cx="24" cy="24" r="17" fill="none" stroke="#222" stroke-width="9.5"/><path stroke="#222" stroke-width="11" stroke-linecap="round" d="M38 37l18 16"/></svg></div>
</div>
<!-- scrollbar strip -->
<div class="a" style="left:797.6px;top:0;width:2.4px;height:414px;background:#f8f9fc"></div>
<!-- watermark -->
<div class="a" style="left:698.8px;top:372.9px;height:10px;line-height:10px;font-size:8.8px;color:#a3a3a3">激活 Windows</div>
<div class="a" style="left:698.8px;top:385px;height:10px;line-height:10px;font-size:6.55px;color:#a8a8a8">转到“设置”以激活 Windows。</div>
</body>
</html>
